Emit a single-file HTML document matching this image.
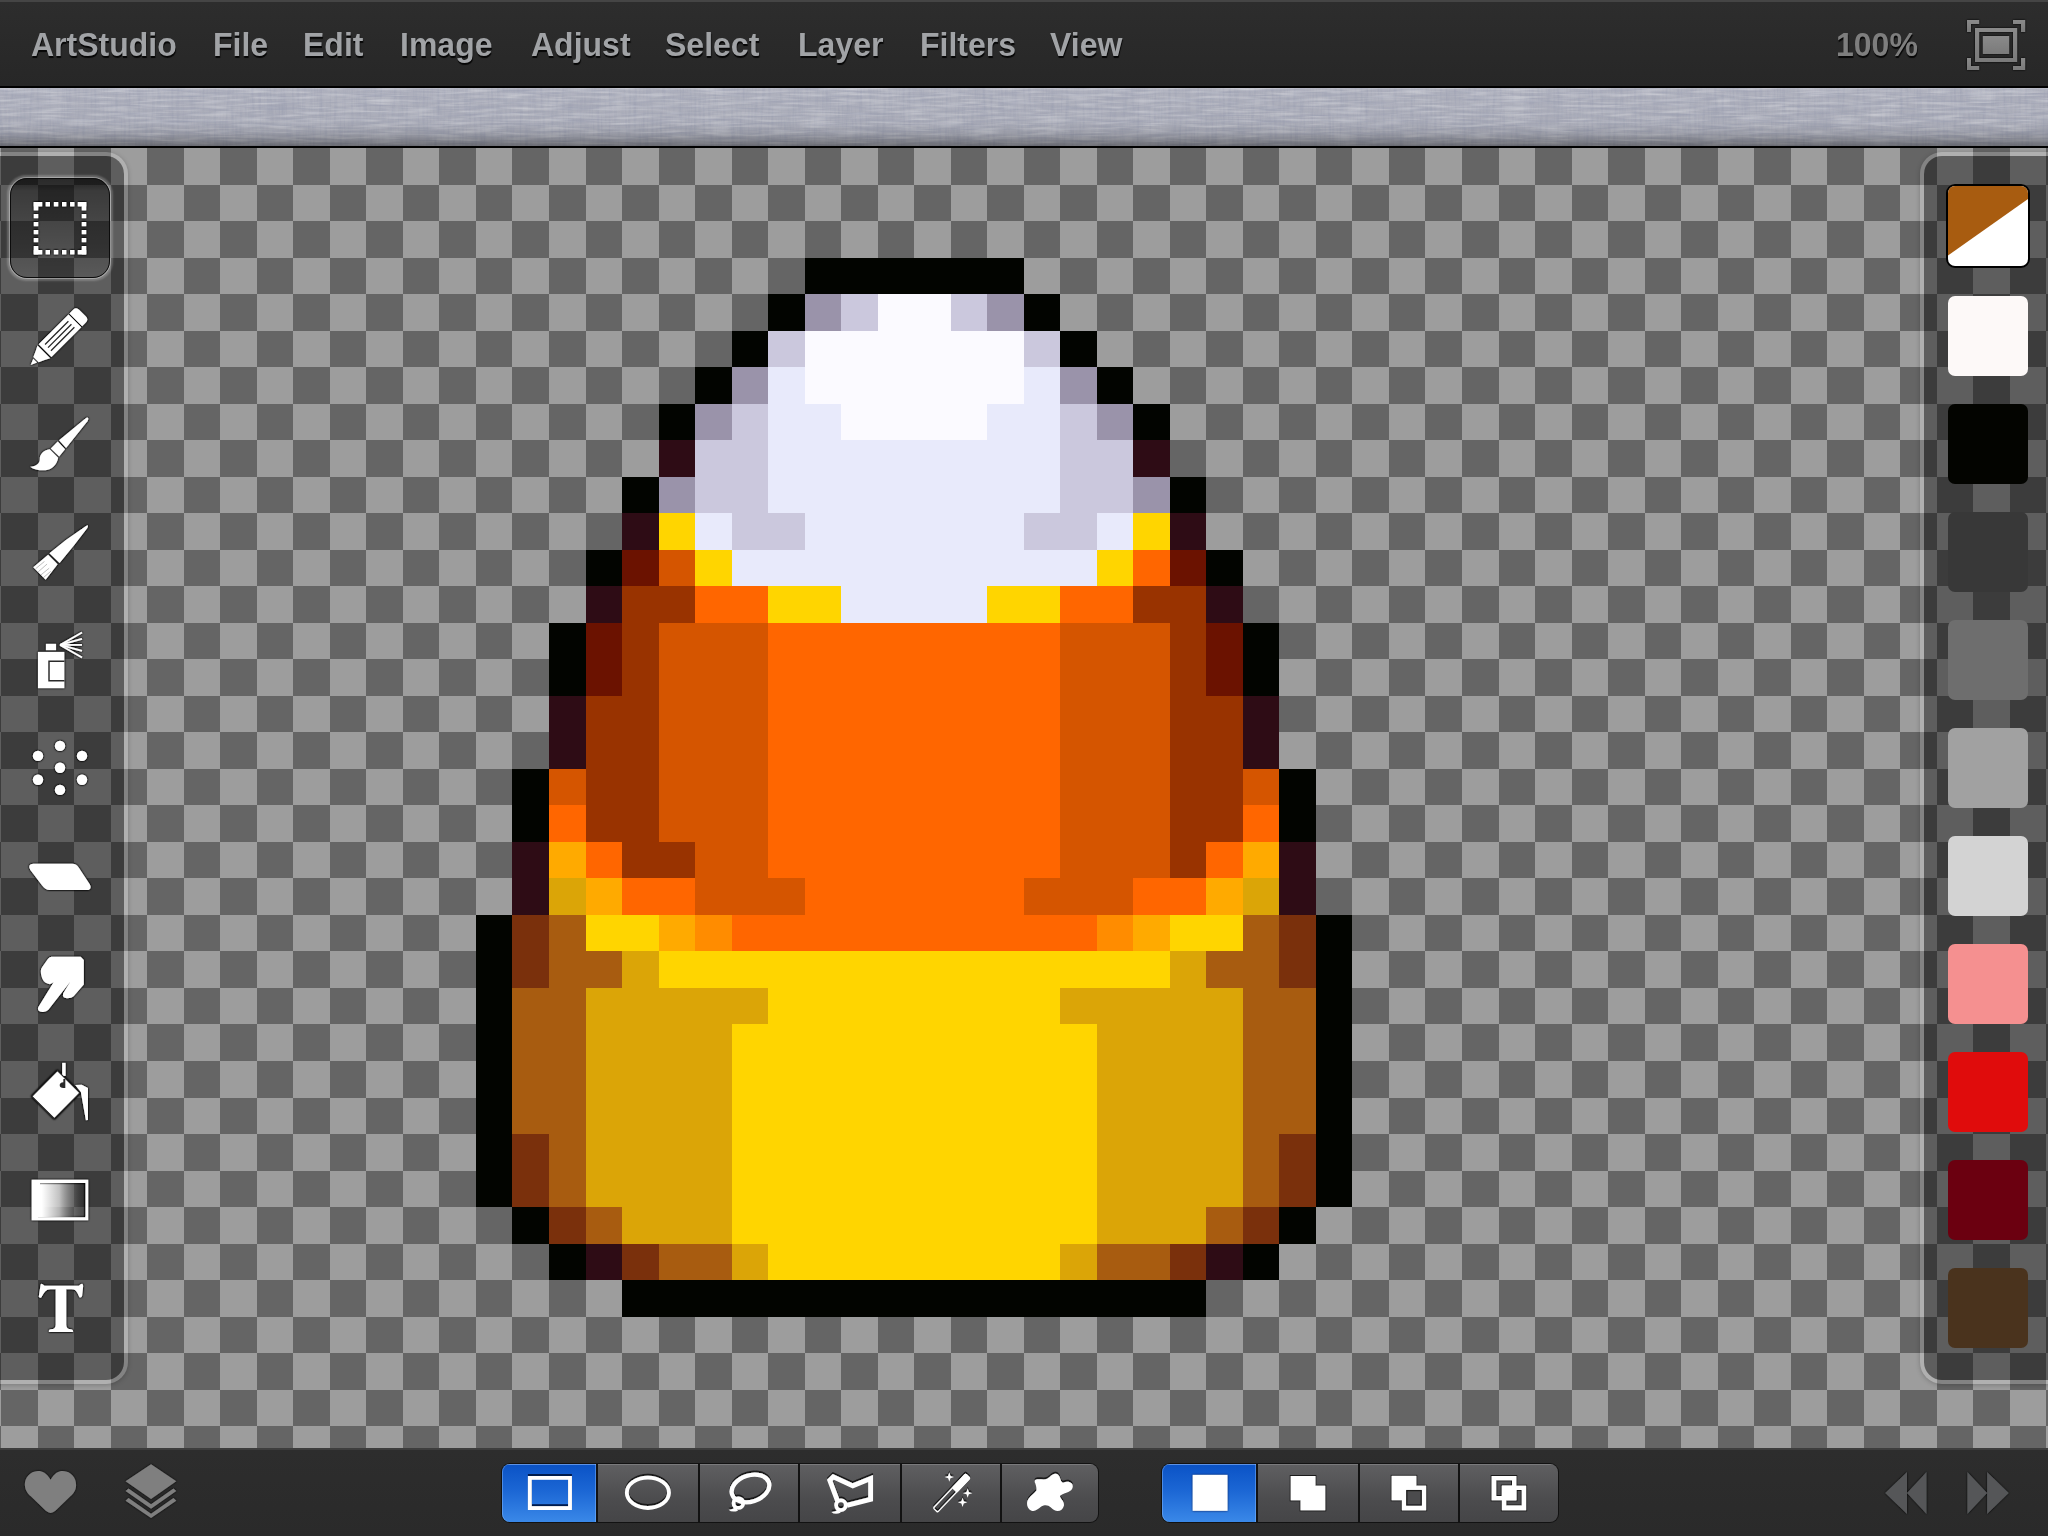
<!DOCTYPE html>
<html><head><meta charset="utf-8">
<style>
html,body{margin:0;padding:0;width:2048px;height:1536px;overflow:hidden;background:#2b2b2b}
body{position:relative;font-family:"Liberation Sans",sans-serif}
.a{position:absolute}
#menubar{left:0;top:0;width:2048px;height:86px;background:linear-gradient(#454545 0,#454545 2px,#2d2d2d 2px,#272727 100%)}
#menuline{left:0;top:86px;width:2048px;height:2px;background:#000}
.mi{position:absolute;top:27px;font-weight:bold;font-size:32px;line-height:36px;color:#a1a3a6;text-shadow:0.5px 1.5px 0.8px rgba(0,0,0,0.85);white-space:nowrap;transform:scaleY(1.04);transform-origin:0 75%}
#zoom{left:1836px;top:27px;font-weight:bold;font-size:32px;line-height:36px;color:#7e7e7e;text-shadow:0.5px 1.5px 0.8px rgba(0,0,0,0.85);transform:scaleY(1.04);transform-origin:0 75%}
#linen{left:0;top:88px;width:2048px;height:58px}
#linenline{left:0;top:146px;width:2048px;height:2px;background:#000}
#canvas{left:0;top:148px;width:2048px;height:1300px}
#toolbar{left:0;top:1448px;width:2048px;height:88px;background:linear-gradient(#3d3d3d 0,#3d3d3d 2px,#2d2d2d 2px,#2a2a2a 100%)}
#lpanel{left:-4px;top:152px;width:128px;height:1224px;border:4px solid rgba(255,255,255,0.2);border-left:none;border-radius:0 22px 22px 0;background:rgba(0,0,0,0.4);background-clip:padding-box;box-shadow:0 1px 5px rgba(0,0,0,0.22)}
#rpanel{left:1920px;top:152px;width:140px;height:1224px;border:4px solid rgba(255,255,255,0.2);border-right:none;border-radius:22px 0 0 22px;background:rgba(0,0,0,0.4);background-clip:padding-box;box-shadow:0 1px 5px rgba(0,0,0,0.22)}
#selbtn{left:10px;top:178px;width:98px;height:98px;border:1px solid #0c0c0c;border-radius:17px;
 background:linear-gradient(rgba(0,0,0,0.55) 0,rgba(0,0,0,0.5) 7%,rgba(0,0,0,0.38) 12%,rgba(0,0,0,0.05) 100%);
 box-shadow:0 0 0 1px rgba(255,255,255,0.3),0 0 2px 2.5px rgba(255,255,255,0.22)}
.sw{position:absolute;left:1948px;width:80px;height:80px;border-radius:7px}
#sw0{left:1946px;top:184px;width:80px;height:80px;border:2px solid #000;border-radius:9px;overflow:hidden;background:#000}

#seg1{left:501px;top:1463px;width:598px;height:60px;border-radius:9px;background:#121212}
#seg2{left:1161px;top:1463px;width:398px;height:60px;border-radius:9px;background:#121212}
.sg{position:absolute;top:1px;height:58px;background:linear-gradient(#7a7a7c 0,#7a7a7c 1px,#5f5f61 1px,#4c4c4e 60%,#454547 100%)}
.sb{background:linear-gradient(#5d92e4 0,#5d92e4 1px,#0b53c6 1px,#1b66d4 45%,#3a88e8 100%);box-shadow:inset 1px 0 0 rgba(140,190,255,0.45),inset -1px 0 0 rgba(140,190,255,0.45)}

</style></head><body>
<div id="menubar" class="a"></div>
<div id="menuline" class="a"></div>
<span class="mi" style="left:31px">ArtStudio</span><span class="mi" style="left:213px">File</span><span class="mi" style="left:303px">Edit</span><span class="mi" style="left:400px">Image</span><span class="mi" style="left:531px">Adjust</span><span class="mi" style="left:665px">Select</span><span class="mi" style="left:798px">Layer</span><span class="mi" style="left:920px">Filters</span><span class="mi" style="left:1050px">View</span>
<div id="zoom" class="a">100%</div>
<svg id="linen" class="a" width="2048" height="58" viewBox="0 0 2048 58">
<defs>
<filter id="nzv" x="0" y="0" width="100%" height="100%"><feTurbulence type="fractalNoise" baseFrequency="0.35 0.03" numOctaves="3" seed="3"/><feColorMatrix type="matrix" values="0 0 0 0 0.32  0 0 0 0 0.34  0 0 0 0 0.44  1.0 0 0 0 -0.4"/><feGaussianBlur stdDeviation="0.55"/></filter>
<filter id="nzh" x="0" y="0" width="100%" height="100%"><feTurbulence type="fractalNoise" baseFrequency="0.02 0.4" numOctaves="3" seed="7"/><feColorMatrix type="matrix" values="0 0 0 0 0.32  0 0 0 0 0.34  0 0 0 0 0.44  1.2 0 0 0 -0.5"/><feGaussianBlur stdDeviation="0.55"/></filter>
<filter id="nzl" x="0" y="0" width="100%" height="100%"><feTurbulence type="fractalNoise" baseFrequency="0.03 0.35" numOctaves="2" seed="11"/><feColorMatrix type="matrix" values="0 0 0 0 1  0 0 0 0 1  0 0 0 0 1  0.7 0 0 0 -0.3"/><feGaussianBlur stdDeviation="0.6"/></filter>
<linearGradient id="lg" x1="0" y1="0" x2="0" y2="1"><stop offset="0" stop-color="#000" stop-opacity="0"/><stop offset="0.6" stop-color="#000" stop-opacity="0.03"/><stop offset="0.78" stop-color="#000" stop-opacity="0.12"/><stop offset="0.92" stop-color="#000" stop-opacity="0.28"/><stop offset="1" stop-color="#000" stop-opacity="0.4"/></linearGradient>
</defs>
<rect width="2048" height="58" fill="#b0b2be"/>
<rect width="2048" height="58" filter="url(#nzv)"/>
<rect width="2048" height="58" filter="url(#nzh)"/>
<rect width="2048" height="58" filter="url(#nzl)"/>
<rect width="2048" height="58" fill="url(#lg)"/>
<rect width="2048" height="1.5" fill="#fff" opacity="0.12"/>
</svg>
<div id="linenline" class="a"></div>
<svg id="canvas" class="a" width="2048" height="1300" viewBox="0 148 2048 1300" shape-rendering="crispEdges">
<rect x="0" y="148" width="2048" height="1300" fill="#9d9d9d"/><g fill="#656565"><rect x="1" y="148" width="37" height="37"/><rect x="74" y="148" width="37" height="37"/><rect x="147" y="148" width="37" height="37"/><rect x="220" y="148" width="37" height="37"/><rect x="293" y="148" width="37" height="37"/><rect x="366" y="148" width="37" height="37"/><rect x="439" y="148" width="37" height="37"/><rect x="512" y="148" width="37" height="37"/><rect x="586" y="148" width="36" height="37"/><rect x="659" y="148" width="36" height="37"/><rect x="732" y="148" width="36" height="37"/><rect x="805" y="148" width="36" height="37"/><rect x="878" y="148" width="36" height="37"/><rect x="951" y="148" width="36" height="37"/><rect x="1024" y="148" width="36" height="37"/><rect x="1097" y="148" width="36" height="37"/><rect x="1170" y="148" width="36" height="37"/><rect x="1243" y="148" width="36" height="37"/><rect x="1316" y="148" width="36" height="37"/><rect x="1389" y="148" width="36" height="37"/><rect x="1462" y="148" width="37" height="37"/><rect x="1535" y="148" width="37" height="37"/><rect x="1608" y="148" width="37" height="37"/><rect x="1681" y="148" width="37" height="37"/><rect x="1754" y="148" width="37" height="37"/><rect x="1827" y="148" width="37" height="37"/><rect x="1900" y="148" width="37" height="37"/><rect x="1973" y="148" width="37" height="37"/><rect x="2046" y="148" width="2" height="37"/><rect x="0" y="185" width="1" height="36"/><rect x="38" y="185" width="36" height="36"/><rect x="111" y="185" width="36" height="36"/><rect x="184" y="185" width="36" height="36"/><rect x="257" y="185" width="36" height="36"/><rect x="330" y="185" width="36" height="36"/><rect x="403" y="185" width="36" height="36"/><rect x="476" y="185" width="36" height="36"/><rect x="549" y="185" width="37" height="36"/><rect x="622" y="185" width="37" height="36"/><rect x="695" y="185" width="37" height="36"/><rect x="768" y="185" width="37" height="36"/><rect x="841" y="185" width="37" height="36"/><rect x="914" y="185" width="37" height="36"/><rect x="987" y="185" width="37" height="36"/><rect x="1060" y="185" width="37" height="36"/><rect x="1133" y="185" width="37" height="36"/><rect x="1206" y="185" width="37" height="36"/><rect x="1279" y="185" width="37" height="36"/><rect x="1352" y="185" width="37" height="36"/><rect x="1425" y="185" width="37" height="36"/><rect x="1499" y="185" width="36" height="36"/><rect x="1572" y="185" width="36" height="36"/><rect x="1645" y="185" width="36" height="36"/><rect x="1718" y="185" width="36" height="36"/><rect x="1791" y="185" width="36" height="36"/><rect x="1864" y="185" width="36" height="36"/><rect x="1937" y="185" width="36" height="36"/><rect x="2010" y="185" width="36" height="36"/><rect x="1" y="221" width="37" height="37"/><rect x="74" y="221" width="37" height="37"/><rect x="147" y="221" width="37" height="37"/><rect x="220" y="221" width="37" height="37"/><rect x="293" y="221" width="37" height="37"/><rect x="366" y="221" width="37" height="37"/><rect x="439" y="221" width="37" height="37"/><rect x="512" y="221" width="37" height="37"/><rect x="586" y="221" width="36" height="37"/><rect x="659" y="221" width="36" height="37"/><rect x="732" y="221" width="36" height="37"/><rect x="805" y="221" width="36" height="37"/><rect x="878" y="221" width="36" height="37"/><rect x="951" y="221" width="36" height="37"/><rect x="1024" y="221" width="36" height="37"/><rect x="1097" y="221" width="36" height="37"/><rect x="1170" y="221" width="36" height="37"/><rect x="1243" y="221" width="36" height="37"/><rect x="1316" y="221" width="36" height="37"/><rect x="1389" y="221" width="36" height="37"/><rect x="1462" y="221" width="37" height="37"/><rect x="1535" y="221" width="37" height="37"/><rect x="1608" y="221" width="37" height="37"/><rect x="1681" y="221" width="37" height="37"/><rect x="1754" y="221" width="37" height="37"/><rect x="1827" y="221" width="37" height="37"/><rect x="1900" y="221" width="37" height="37"/><rect x="1973" y="221" width="37" height="37"/><rect x="2046" y="221" width="2" height="37"/><rect x="0" y="258" width="1" height="36"/><rect x="38" y="258" width="36" height="36"/><rect x="111" y="258" width="36" height="36"/><rect x="184" y="258" width="36" height="36"/><rect x="257" y="258" width="36" height="36"/><rect x="330" y="258" width="36" height="36"/><rect x="403" y="258" width="36" height="36"/><rect x="476" y="258" width="36" height="36"/><rect x="549" y="258" width="37" height="36"/><rect x="622" y="258" width="37" height="36"/><rect x="695" y="258" width="37" height="36"/><rect x="768" y="258" width="37" height="36"/><rect x="841" y="258" width="37" height="36"/><rect x="914" y="258" width="37" height="36"/><rect x="987" y="258" width="37" height="36"/><rect x="1060" y="258" width="37" height="36"/><rect x="1133" y="258" width="37" height="36"/><rect x="1206" y="258" width="37" height="36"/><rect x="1279" y="258" width="37" height="36"/><rect x="1352" y="258" width="37" height="36"/><rect x="1425" y="258" width="37" height="36"/><rect x="1499" y="258" width="36" height="36"/><rect x="1572" y="258" width="36" height="36"/><rect x="1645" y="258" width="36" height="36"/><rect x="1718" y="258" width="36" height="36"/><rect x="1791" y="258" width="36" height="36"/><rect x="1864" y="258" width="36" height="36"/><rect x="1937" y="258" width="36" height="36"/><rect x="2010" y="258" width="36" height="36"/><rect x="1" y="294" width="37" height="37"/><rect x="74" y="294" width="37" height="37"/><rect x="147" y="294" width="37" height="37"/><rect x="220" y="294" width="37" height="37"/><rect x="293" y="294" width="37" height="37"/><rect x="366" y="294" width="37" height="37"/><rect x="439" y="294" width="37" height="37"/><rect x="512" y="294" width="37" height="37"/><rect x="586" y="294" width="36" height="37"/><rect x="659" y="294" width="36" height="37"/><rect x="732" y="294" width="36" height="37"/><rect x="805" y="294" width="36" height="37"/><rect x="878" y="294" width="36" height="37"/><rect x="951" y="294" width="36" height="37"/><rect x="1024" y="294" width="36" height="37"/><rect x="1097" y="294" width="36" height="37"/><rect x="1170" y="294" width="36" height="37"/><rect x="1243" y="294" width="36" height="37"/><rect x="1316" y="294" width="36" height="37"/><rect x="1389" y="294" width="36" height="37"/><rect x="1462" y="294" width="37" height="37"/><rect x="1535" y="294" width="37" height="37"/><rect x="1608" y="294" width="37" height="37"/><rect x="1681" y="294" width="37" height="37"/><rect x="1754" y="294" width="37" height="37"/><rect x="1827" y="294" width="37" height="37"/><rect x="1900" y="294" width="37" height="37"/><rect x="1973" y="294" width="37" height="37"/><rect x="2046" y="294" width="2" height="37"/><rect x="0" y="331" width="1" height="36"/><rect x="38" y="331" width="36" height="36"/><rect x="111" y="331" width="36" height="36"/><rect x="184" y="331" width="36" height="36"/><rect x="257" y="331" width="36" height="36"/><rect x="330" y="331" width="36" height="36"/><rect x="403" y="331" width="36" height="36"/><rect x="476" y="331" width="36" height="36"/><rect x="549" y="331" width="37" height="36"/><rect x="622" y="331" width="37" height="36"/><rect x="695" y="331" width="37" height="36"/><rect x="768" y="331" width="37" height="36"/><rect x="841" y="331" width="37" height="36"/><rect x="914" y="331" width="37" height="36"/><rect x="987" y="331" width="37" height="36"/><rect x="1060" y="331" width="37" height="36"/><rect x="1133" y="331" width="37" height="36"/><rect x="1206" y="331" width="37" height="36"/><rect x="1279" y="331" width="37" height="36"/><rect x="1352" y="331" width="37" height="36"/><rect x="1425" y="331" width="37" height="36"/><rect x="1499" y="331" width="36" height="36"/><rect x="1572" y="331" width="36" height="36"/><rect x="1645" y="331" width="36" height="36"/><rect x="1718" y="331" width="36" height="36"/><rect x="1791" y="331" width="36" height="36"/><rect x="1864" y="331" width="36" height="36"/><rect x="1937" y="331" width="36" height="36"/><rect x="2010" y="331" width="36" height="36"/><rect x="1" y="367" width="37" height="37"/><rect x="74" y="367" width="37" height="37"/><rect x="147" y="367" width="37" height="37"/><rect x="220" y="367" width="37" height="37"/><rect x="293" y="367" width="37" height="37"/><rect x="366" y="367" width="37" height="37"/><rect x="439" y="367" width="37" height="37"/><rect x="512" y="367" width="37" height="37"/><rect x="586" y="367" width="36" height="37"/><rect x="659" y="367" width="36" height="37"/><rect x="732" y="367" width="36" height="37"/><rect x="805" y="367" width="36" height="37"/><rect x="878" y="367" width="36" height="37"/><rect x="951" y="367" width="36" height="37"/><rect x="1024" y="367" width="36" height="37"/><rect x="1097" y="367" width="36" height="37"/><rect x="1170" y="367" width="36" height="37"/><rect x="1243" y="367" width="36" height="37"/><rect x="1316" y="367" width="36" height="37"/><rect x="1389" y="367" width="36" height="37"/><rect x="1462" y="367" width="37" height="37"/><rect x="1535" y="367" width="37" height="37"/><rect x="1608" y="367" width="37" height="37"/><rect x="1681" y="367" width="37" height="37"/><rect x="1754" y="367" width="37" height="37"/><rect x="1827" y="367" width="37" height="37"/><rect x="1900" y="367" width="37" height="37"/><rect x="1973" y="367" width="37" height="37"/><rect x="2046" y="367" width="2" height="37"/><rect x="0" y="404" width="1" height="36"/><rect x="38" y="404" width="36" height="36"/><rect x="111" y="404" width="36" height="36"/><rect x="184" y="404" width="36" height="36"/><rect x="257" y="404" width="36" height="36"/><rect x="330" y="404" width="36" height="36"/><rect x="403" y="404" width="36" height="36"/><rect x="476" y="404" width="36" height="36"/><rect x="549" y="404" width="37" height="36"/><rect x="622" y="404" width="37" height="36"/><rect x="695" y="404" width="37" height="36"/><rect x="768" y="404" width="37" height="36"/><rect x="841" y="404" width="37" height="36"/><rect x="914" y="404" width="37" height="36"/><rect x="987" y="404" width="37" height="36"/><rect x="1060" y="404" width="37" height="36"/><rect x="1133" y="404" width="37" height="36"/><rect x="1206" y="404" width="37" height="36"/><rect x="1279" y="404" width="37" height="36"/><rect x="1352" y="404" width="37" height="36"/><rect x="1425" y="404" width="37" height="36"/><rect x="1499" y="404" width="36" height="36"/><rect x="1572" y="404" width="36" height="36"/><rect x="1645" y="404" width="36" height="36"/><rect x="1718" y="404" width="36" height="36"/><rect x="1791" y="404" width="36" height="36"/><rect x="1864" y="404" width="36" height="36"/><rect x="1937" y="404" width="36" height="36"/><rect x="2010" y="404" width="36" height="36"/><rect x="1" y="440" width="37" height="37"/><rect x="74" y="440" width="37" height="37"/><rect x="147" y="440" width="37" height="37"/><rect x="220" y="440" width="37" height="37"/><rect x="293" y="440" width="37" height="37"/><rect x="366" y="440" width="37" height="37"/><rect x="439" y="440" width="37" height="37"/><rect x="512" y="440" width="37" height="37"/><rect x="586" y="440" width="36" height="37"/><rect x="659" y="440" width="36" height="37"/><rect x="732" y="440" width="36" height="37"/><rect x="805" y="440" width="36" height="37"/><rect x="878" y="440" width="36" height="37"/><rect x="951" y="440" width="36" height="37"/><rect x="1024" y="440" width="36" height="37"/><rect x="1097" y="440" width="36" height="37"/><rect x="1170" y="440" width="36" height="37"/><rect x="1243" y="440" width="36" height="37"/><rect x="1316" y="440" width="36" height="37"/><rect x="1389" y="440" width="36" height="37"/><rect x="1462" y="440" width="37" height="37"/><rect x="1535" y="440" width="37" height="37"/><rect x="1608" y="440" width="37" height="37"/><rect x="1681" y="440" width="37" height="37"/><rect x="1754" y="440" width="37" height="37"/><rect x="1827" y="440" width="37" height="37"/><rect x="1900" y="440" width="37" height="37"/><rect x="1973" y="440" width="37" height="37"/><rect x="2046" y="440" width="2" height="37"/><rect x="0" y="477" width="1" height="36"/><rect x="38" y="477" width="36" height="36"/><rect x="111" y="477" width="36" height="36"/><rect x="184" y="477" width="36" height="36"/><rect x="257" y="477" width="36" height="36"/><rect x="330" y="477" width="36" height="36"/><rect x="403" y="477" width="36" height="36"/><rect x="476" y="477" width="36" height="36"/><rect x="549" y="477" width="37" height="36"/><rect x="622" y="477" width="37" height="36"/><rect x="695" y="477" width="37" height="36"/><rect x="768" y="477" width="37" height="36"/><rect x="841" y="477" width="37" height="36"/><rect x="914" y="477" width="37" height="36"/><rect x="987" y="477" width="37" height="36"/><rect x="1060" y="477" width="37" height="36"/><rect x="1133" y="477" width="37" height="36"/><rect x="1206" y="477" width="37" height="36"/><rect x="1279" y="477" width="37" height="36"/><rect x="1352" y="477" width="37" height="36"/><rect x="1425" y="477" width="37" height="36"/><rect x="1499" y="477" width="36" height="36"/><rect x="1572" y="477" width="36" height="36"/><rect x="1645" y="477" width="36" height="36"/><rect x="1718" y="477" width="36" height="36"/><rect x="1791" y="477" width="36" height="36"/><rect x="1864" y="477" width="36" height="36"/><rect x="1937" y="477" width="36" height="36"/><rect x="2010" y="477" width="36" height="36"/><rect x="1" y="513" width="37" height="37"/><rect x="74" y="513" width="37" height="37"/><rect x="147" y="513" width="37" height="37"/><rect x="220" y="513" width="37" height="37"/><rect x="293" y="513" width="37" height="37"/><rect x="366" y="513" width="37" height="37"/><rect x="439" y="513" width="37" height="37"/><rect x="512" y="513" width="37" height="37"/><rect x="586" y="513" width="36" height="37"/><rect x="659" y="513" width="36" height="37"/><rect x="732" y="513" width="36" height="37"/><rect x="805" y="513" width="36" height="37"/><rect x="878" y="513" width="36" height="37"/><rect x="951" y="513" width="36" height="37"/><rect x="1024" y="513" width="36" height="37"/><rect x="1097" y="513" width="36" height="37"/><rect x="1170" y="513" width="36" height="37"/><rect x="1243" y="513" width="36" height="37"/><rect x="1316" y="513" width="36" height="37"/><rect x="1389" y="513" width="36" height="37"/><rect x="1462" y="513" width="37" height="37"/><rect x="1535" y="513" width="37" height="37"/><rect x="1608" y="513" width="37" height="37"/><rect x="1681" y="513" width="37" height="37"/><rect x="1754" y="513" width="37" height="37"/><rect x="1827" y="513" width="37" height="37"/><rect x="1900" y="513" width="37" height="37"/><rect x="1973" y="513" width="37" height="37"/><rect x="2046" y="513" width="2" height="37"/><rect x="0" y="550" width="1" height="36"/><rect x="38" y="550" width="36" height="36"/><rect x="111" y="550" width="36" height="36"/><rect x="184" y="550" width="36" height="36"/><rect x="257" y="550" width="36" height="36"/><rect x="330" y="550" width="36" height="36"/><rect x="403" y="550" width="36" height="36"/><rect x="476" y="550" width="36" height="36"/><rect x="549" y="550" width="37" height="36"/><rect x="622" y="550" width="37" height="36"/><rect x="695" y="550" width="37" height="36"/><rect x="768" y="550" width="37" height="36"/><rect x="841" y="550" width="37" height="36"/><rect x="914" y="550" width="37" height="36"/><rect x="987" y="550" width="37" height="36"/><rect x="1060" y="550" width="37" height="36"/><rect x="1133" y="550" width="37" height="36"/><rect x="1206" y="550" width="37" height="36"/><rect x="1279" y="550" width="37" height="36"/><rect x="1352" y="550" width="37" height="36"/><rect x="1425" y="550" width="37" height="36"/><rect x="1499" y="550" width="36" height="36"/><rect x="1572" y="550" width="36" height="36"/><rect x="1645" y="550" width="36" height="36"/><rect x="1718" y="550" width="36" height="36"/><rect x="1791" y="550" width="36" height="36"/><rect x="1864" y="550" width="36" height="36"/><rect x="1937" y="550" width="36" height="36"/><rect x="2010" y="550" width="36" height="36"/><rect x="1" y="586" width="37" height="37"/><rect x="74" y="586" width="37" height="37"/><rect x="147" y="586" width="37" height="37"/><rect x="220" y="586" width="37" height="37"/><rect x="293" y="586" width="37" height="37"/><rect x="366" y="586" width="37" height="37"/><rect x="439" y="586" width="37" height="37"/><rect x="512" y="586" width="37" height="37"/><rect x="586" y="586" width="36" height="37"/><rect x="659" y="586" width="36" height="37"/><rect x="732" y="586" width="36" height="37"/><rect x="805" y="586" width="36" height="37"/><rect x="878" y="586" width="36" height="37"/><rect x="951" y="586" width="36" height="37"/><rect x="1024" y="586" width="36" height="37"/><rect x="1097" y="586" width="36" height="37"/><rect x="1170" y="586" width="36" height="37"/><rect x="1243" y="586" width="36" height="37"/><rect x="1316" y="586" width="36" height="37"/><rect x="1389" y="586" width="36" height="37"/><rect x="1462" y="586" width="37" height="37"/><rect x="1535" y="586" width="37" height="37"/><rect x="1608" y="586" width="37" height="37"/><rect x="1681" y="586" width="37" height="37"/><rect x="1754" y="586" width="37" height="37"/><rect x="1827" y="586" width="37" height="37"/><rect x="1900" y="586" width="37" height="37"/><rect x="1973" y="586" width="37" height="37"/><rect x="2046" y="586" width="2" height="37"/><rect x="0" y="623" width="1" height="36"/><rect x="38" y="623" width="36" height="36"/><rect x="111" y="623" width="36" height="36"/><rect x="184" y="623" width="36" height="36"/><rect x="257" y="623" width="36" height="36"/><rect x="330" y="623" width="36" height="36"/><rect x="403" y="623" width="36" height="36"/><rect x="476" y="623" width="36" height="36"/><rect x="549" y="623" width="37" height="36"/><rect x="622" y="623" width="37" height="36"/><rect x="695" y="623" width="37" height="36"/><rect x="768" y="623" width="37" height="36"/><rect x="841" y="623" width="37" height="36"/><rect x="914" y="623" width="37" height="36"/><rect x="987" y="623" width="37" height="36"/><rect x="1060" y="623" width="37" height="36"/><rect x="1133" y="623" width="37" height="36"/><rect x="1206" y="623" width="37" height="36"/><rect x="1279" y="623" width="37" height="36"/><rect x="1352" y="623" width="37" height="36"/><rect x="1425" y="623" width="37" height="36"/><rect x="1499" y="623" width="36" height="36"/><rect x="1572" y="623" width="36" height="36"/><rect x="1645" y="623" width="36" height="36"/><rect x="1718" y="623" width="36" height="36"/><rect x="1791" y="623" width="36" height="36"/><rect x="1864" y="623" width="36" height="36"/><rect x="1937" y="623" width="36" height="36"/><rect x="2010" y="623" width="36" height="36"/><rect x="1" y="659" width="37" height="37"/><rect x="74" y="659" width="37" height="37"/><rect x="147" y="659" width="37" height="37"/><rect x="220" y="659" width="37" height="37"/><rect x="293" y="659" width="37" height="37"/><rect x="366" y="659" width="37" height="37"/><rect x="439" y="659" width="37" height="37"/><rect x="512" y="659" width="37" height="37"/><rect x="586" y="659" width="36" height="37"/><rect x="659" y="659" width="36" height="37"/><rect x="732" y="659" width="36" height="37"/><rect x="805" y="659" width="36" height="37"/><rect x="878" y="659" width="36" height="37"/><rect x="951" y="659" width="36" height="37"/><rect x="1024" y="659" width="36" height="37"/><rect x="1097" y="659" width="36" height="37"/><rect x="1170" y="659" width="36" height="37"/><rect x="1243" y="659" width="36" height="37"/><rect x="1316" y="659" width="36" height="37"/><rect x="1389" y="659" width="36" height="37"/><rect x="1462" y="659" width="37" height="37"/><rect x="1535" y="659" width="37" height="37"/><rect x="1608" y="659" width="37" height="37"/><rect x="1681" y="659" width="37" height="37"/><rect x="1754" y="659" width="37" height="37"/><rect x="1827" y="659" width="37" height="37"/><rect x="1900" y="659" width="37" height="37"/><rect x="1973" y="659" width="37" height="37"/><rect x="2046" y="659" width="2" height="37"/><rect x="0" y="696" width="1" height="36"/><rect x="38" y="696" width="36" height="36"/><rect x="111" y="696" width="36" height="36"/><rect x="184" y="696" width="36" height="36"/><rect x="257" y="696" width="36" height="36"/><rect x="330" y="696" width="36" height="36"/><rect x="403" y="696" width="36" height="36"/><rect x="476" y="696" width="36" height="36"/><rect x="549" y="696" width="37" height="36"/><rect x="622" y="696" width="37" height="36"/><rect x="695" y="696" width="37" height="36"/><rect x="768" y="696" width="37" height="36"/><rect x="841" y="696" width="37" height="36"/><rect x="914" y="696" width="37" height="36"/><rect x="987" y="696" width="37" height="36"/><rect x="1060" y="696" width="37" height="36"/><rect x="1133" y="696" width="37" height="36"/><rect x="1206" y="696" width="37" height="36"/><rect x="1279" y="696" width="37" height="36"/><rect x="1352" y="696" width="37" height="36"/><rect x="1425" y="696" width="37" height="36"/><rect x="1499" y="696" width="36" height="36"/><rect x="1572" y="696" width="36" height="36"/><rect x="1645" y="696" width="36" height="36"/><rect x="1718" y="696" width="36" height="36"/><rect x="1791" y="696" width="36" height="36"/><rect x="1864" y="696" width="36" height="36"/><rect x="1937" y="696" width="36" height="36"/><rect x="2010" y="696" width="36" height="36"/><rect x="1" y="732" width="37" height="37"/><rect x="74" y="732" width="37" height="37"/><rect x="147" y="732" width="37" height="37"/><rect x="220" y="732" width="37" height="37"/><rect x="293" y="732" width="37" height="37"/><rect x="366" y="732" width="37" height="37"/><rect x="439" y="732" width="37" height="37"/><rect x="512" y="732" width="37" height="37"/><rect x="586" y="732" width="36" height="37"/><rect x="659" y="732" width="36" height="37"/><rect x="732" y="732" width="36" height="37"/><rect x="805" y="732" width="36" height="37"/><rect x="878" y="732" width="36" height="37"/><rect x="951" y="732" width="36" height="37"/><rect x="1024" y="732" width="36" height="37"/><rect x="1097" y="732" width="36" height="37"/><rect x="1170" y="732" width="36" height="37"/><rect x="1243" y="732" width="36" height="37"/><rect x="1316" y="732" width="36" height="37"/><rect x="1389" y="732" width="36" height="37"/><rect x="1462" y="732" width="37" height="37"/><rect x="1535" y="732" width="37" height="37"/><rect x="1608" y="732" width="37" height="37"/><rect x="1681" y="732" width="37" height="37"/><rect x="1754" y="732" width="37" height="37"/><rect x="1827" y="732" width="37" height="37"/><rect x="1900" y="732" width="37" height="37"/><rect x="1973" y="732" width="37" height="37"/><rect x="2046" y="732" width="2" height="37"/><rect x="0" y="769" width="1" height="36"/><rect x="38" y="769" width="36" height="36"/><rect x="111" y="769" width="36" height="36"/><rect x="184" y="769" width="36" height="36"/><rect x="257" y="769" width="36" height="36"/><rect x="330" y="769" width="36" height="36"/><rect x="403" y="769" width="36" height="36"/><rect x="476" y="769" width="36" height="36"/><rect x="549" y="769" width="37" height="36"/><rect x="622" y="769" width="37" height="36"/><rect x="695" y="769" width="37" height="36"/><rect x="768" y="769" width="37" height="36"/><rect x="841" y="769" width="37" height="36"/><rect x="914" y="769" width="37" height="36"/><rect x="987" y="769" width="37" height="36"/><rect x="1060" y="769" width="37" height="36"/><rect x="1133" y="769" width="37" height="36"/><rect x="1206" y="769" width="37" height="36"/><rect x="1279" y="769" width="37" height="36"/><rect x="1352" y="769" width="37" height="36"/><rect x="1425" y="769" width="37" height="36"/><rect x="1499" y="769" width="36" height="36"/><rect x="1572" y="769" width="36" height="36"/><rect x="1645" y="769" width="36" height="36"/><rect x="1718" y="769" width="36" height="36"/><rect x="1791" y="769" width="36" height="36"/><rect x="1864" y="769" width="36" height="36"/><rect x="1937" y="769" width="36" height="36"/><rect x="2010" y="769" width="36" height="36"/><rect x="1" y="805" width="37" height="37"/><rect x="74" y="805" width="37" height="37"/><rect x="147" y="805" width="37" height="37"/><rect x="220" y="805" width="37" height="37"/><rect x="293" y="805" width="37" height="37"/><rect x="366" y="805" width="37" height="37"/><rect x="439" y="805" width="37" height="37"/><rect x="512" y="805" width="37" height="37"/><rect x="586" y="805" width="36" height="37"/><rect x="659" y="805" width="36" height="37"/><rect x="732" y="805" width="36" height="37"/><rect x="805" y="805" width="36" height="37"/><rect x="878" y="805" width="36" height="37"/><rect x="951" y="805" width="36" height="37"/><rect x="1024" y="805" width="36" height="37"/><rect x="1097" y="805" width="36" height="37"/><rect x="1170" y="805" width="36" height="37"/><rect x="1243" y="805" width="36" height="37"/><rect x="1316" y="805" width="36" height="37"/><rect x="1389" y="805" width="36" height="37"/><rect x="1462" y="805" width="37" height="37"/><rect x="1535" y="805" width="37" height="37"/><rect x="1608" y="805" width="37" height="37"/><rect x="1681" y="805" width="37" height="37"/><rect x="1754" y="805" width="37" height="37"/><rect x="1827" y="805" width="37" height="37"/><rect x="1900" y="805" width="37" height="37"/><rect x="1973" y="805" width="37" height="37"/><rect x="2046" y="805" width="2" height="37"/><rect x="0" y="842" width="1" height="36"/><rect x="38" y="842" width="36" height="36"/><rect x="111" y="842" width="36" height="36"/><rect x="184" y="842" width="36" height="36"/><rect x="257" y="842" width="36" height="36"/><rect x="330" y="842" width="36" height="36"/><rect x="403" y="842" width="36" height="36"/><rect x="476" y="842" width="36" height="36"/><rect x="549" y="842" width="37" height="36"/><rect x="622" y="842" width="37" height="36"/><rect x="695" y="842" width="37" height="36"/><rect x="768" y="842" width="37" height="36"/><rect x="841" y="842" width="37" height="36"/><rect x="914" y="842" width="37" height="36"/><rect x="987" y="842" width="37" height="36"/><rect x="1060" y="842" width="37" height="36"/><rect x="1133" y="842" width="37" height="36"/><rect x="1206" y="842" width="37" height="36"/><rect x="1279" y="842" width="37" height="36"/><rect x="1352" y="842" width="37" height="36"/><rect x="1425" y="842" width="37" height="36"/><rect x="1499" y="842" width="36" height="36"/><rect x="1572" y="842" width="36" height="36"/><rect x="1645" y="842" width="36" height="36"/><rect x="1718" y="842" width="36" height="36"/><rect x="1791" y="842" width="36" height="36"/><rect x="1864" y="842" width="36" height="36"/><rect x="1937" y="842" width="36" height="36"/><rect x="2010" y="842" width="36" height="36"/><rect x="1" y="878" width="37" height="37"/><rect x="74" y="878" width="37" height="37"/><rect x="147" y="878" width="37" height="37"/><rect x="220" y="878" width="37" height="37"/><rect x="293" y="878" width="37" height="37"/><rect x="366" y="878" width="37" height="37"/><rect x="439" y="878" width="37" height="37"/><rect x="512" y="878" width="37" height="37"/><rect x="586" y="878" width="36" height="37"/><rect x="659" y="878" width="36" height="37"/><rect x="732" y="878" width="36" height="37"/><rect x="805" y="878" width="36" height="37"/><rect x="878" y="878" width="36" height="37"/><rect x="951" y="878" width="36" height="37"/><rect x="1024" y="878" width="36" height="37"/><rect x="1097" y="878" width="36" height="37"/><rect x="1170" y="878" width="36" height="37"/><rect x="1243" y="878" width="36" height="37"/><rect x="1316" y="878" width="36" height="37"/><rect x="1389" y="878" width="36" height="37"/><rect x="1462" y="878" width="37" height="37"/><rect x="1535" y="878" width="37" height="37"/><rect x="1608" y="878" width="37" height="37"/><rect x="1681" y="878" width="37" height="37"/><rect x="1754" y="878" width="37" height="37"/><rect x="1827" y="878" width="37" height="37"/><rect x="1900" y="878" width="37" height="37"/><rect x="1973" y="878" width="37" height="37"/><rect x="2046" y="878" width="2" height="37"/><rect x="0" y="915" width="1" height="36"/><rect x="38" y="915" width="36" height="36"/><rect x="111" y="915" width="36" height="36"/><rect x="184" y="915" width="36" height="36"/><rect x="257" y="915" width="36" height="36"/><rect x="330" y="915" width="36" height="36"/><rect x="403" y="915" width="36" height="36"/><rect x="476" y="915" width="36" height="36"/><rect x="549" y="915" width="37" height="36"/><rect x="622" y="915" width="37" height="36"/><rect x="695" y="915" width="37" height="36"/><rect x="768" y="915" width="37" height="36"/><rect x="841" y="915" width="37" height="36"/><rect x="914" y="915" width="37" height="36"/><rect x="987" y="915" width="37" height="36"/><rect x="1060" y="915" width="37" height="36"/><rect x="1133" y="915" width="37" height="36"/><rect x="1206" y="915" width="37" height="36"/><rect x="1279" y="915" width="37" height="36"/><rect x="1352" y="915" width="37" height="36"/><rect x="1425" y="915" width="37" height="36"/><rect x="1499" y="915" width="36" height="36"/><rect x="1572" y="915" width="36" height="36"/><rect x="1645" y="915" width="36" height="36"/><rect x="1718" y="915" width="36" height="36"/><rect x="1791" y="915" width="36" height="36"/><rect x="1864" y="915" width="36" height="36"/><rect x="1937" y="915" width="36" height="36"/><rect x="2010" y="915" width="36" height="36"/><rect x="1" y="951" width="37" height="37"/><rect x="74" y="951" width="37" height="37"/><rect x="147" y="951" width="37" height="37"/><rect x="220" y="951" width="37" height="37"/><rect x="293" y="951" width="37" height="37"/><rect x="366" y="951" width="37" height="37"/><rect x="439" y="951" width="37" height="37"/><rect x="512" y="951" width="37" height="37"/><rect x="586" y="951" width="36" height="37"/><rect x="659" y="951" width="36" height="37"/><rect x="732" y="951" width="36" height="37"/><rect x="805" y="951" width="36" height="37"/><rect x="878" y="951" width="36" height="37"/><rect x="951" y="951" width="36" height="37"/><rect x="1024" y="951" width="36" height="37"/><rect x="1097" y="951" width="36" height="37"/><rect x="1170" y="951" width="36" height="37"/><rect x="1243" y="951" width="36" height="37"/><rect x="1316" y="951" width="36" height="37"/><rect x="1389" y="951" width="36" height="37"/><rect x="1462" y="951" width="37" height="37"/><rect x="1535" y="951" width="37" height="37"/><rect x="1608" y="951" width="37" height="37"/><rect x="1681" y="951" width="37" height="37"/><rect x="1754" y="951" width="37" height="37"/><rect x="1827" y="951" width="37" height="37"/><rect x="1900" y="951" width="37" height="37"/><rect x="1973" y="951" width="37" height="37"/><rect x="2046" y="951" width="2" height="37"/><rect x="0" y="988" width="1" height="36"/><rect x="38" y="988" width="36" height="36"/><rect x="111" y="988" width="36" height="36"/><rect x="184" y="988" width="36" height="36"/><rect x="257" y="988" width="36" height="36"/><rect x="330" y="988" width="36" height="36"/><rect x="403" y="988" width="36" height="36"/><rect x="476" y="988" width="36" height="36"/><rect x="549" y="988" width="37" height="36"/><rect x="622" y="988" width="37" height="36"/><rect x="695" y="988" width="37" height="36"/><rect x="768" y="988" width="37" height="36"/><rect x="841" y="988" width="37" height="36"/><rect x="914" y="988" width="37" height="36"/><rect x="987" y="988" width="37" height="36"/><rect x="1060" y="988" width="37" height="36"/><rect x="1133" y="988" width="37" height="36"/><rect x="1206" y="988" width="37" height="36"/><rect x="1279" y="988" width="37" height="36"/><rect x="1352" y="988" width="37" height="36"/><rect x="1425" y="988" width="37" height="36"/><rect x="1499" y="988" width="36" height="36"/><rect x="1572" y="988" width="36" height="36"/><rect x="1645" y="988" width="36" height="36"/><rect x="1718" y="988" width="36" height="36"/><rect x="1791" y="988" width="36" height="36"/><rect x="1864" y="988" width="36" height="36"/><rect x="1937" y="988" width="36" height="36"/><rect x="2010" y="988" width="36" height="36"/><rect x="1" y="1024" width="37" height="37"/><rect x="74" y="1024" width="37" height="37"/><rect x="147" y="1024" width="37" height="37"/><rect x="220" y="1024" width="37" height="37"/><rect x="293" y="1024" width="37" height="37"/><rect x="366" y="1024" width="37" height="37"/><rect x="439" y="1024" width="37" height="37"/><rect x="512" y="1024" width="37" height="37"/><rect x="586" y="1024" width="36" height="37"/><rect x="659" y="1024" width="36" height="37"/><rect x="732" y="1024" width="36" height="37"/><rect x="805" y="1024" width="36" height="37"/><rect x="878" y="1024" width="36" height="37"/><rect x="951" y="1024" width="36" height="37"/><rect x="1024" y="1024" width="36" height="37"/><rect x="1097" y="1024" width="36" height="37"/><rect x="1170" y="1024" width="36" height="37"/><rect x="1243" y="1024" width="36" height="37"/><rect x="1316" y="1024" width="36" height="37"/><rect x="1389" y="1024" width="36" height="37"/><rect x="1462" y="1024" width="37" height="37"/><rect x="1535" y="1024" width="37" height="37"/><rect x="1608" y="1024" width="37" height="37"/><rect x="1681" y="1024" width="37" height="37"/><rect x="1754" y="1024" width="37" height="37"/><rect x="1827" y="1024" width="37" height="37"/><rect x="1900" y="1024" width="37" height="37"/><rect x="1973" y="1024" width="37" height="37"/><rect x="2046" y="1024" width="2" height="37"/><rect x="0" y="1061" width="1" height="37"/><rect x="38" y="1061" width="36" height="37"/><rect x="111" y="1061" width="36" height="37"/><rect x="184" y="1061" width="36" height="37"/><rect x="257" y="1061" width="36" height="37"/><rect x="330" y="1061" width="36" height="37"/><rect x="403" y="1061" width="36" height="37"/><rect x="476" y="1061" width="36" height="37"/><rect x="549" y="1061" width="37" height="37"/><rect x="622" y="1061" width="37" height="37"/><rect x="695" y="1061" width="37" height="37"/><rect x="768" y="1061" width="37" height="37"/><rect x="841" y="1061" width="37" height="37"/><rect x="914" y="1061" width="37" height="37"/><rect x="987" y="1061" width="37" height="37"/><rect x="1060" y="1061" width="37" height="37"/><rect x="1133" y="1061" width="37" height="37"/><rect x="1206" y="1061" width="37" height="37"/><rect x="1279" y="1061" width="37" height="37"/><rect x="1352" y="1061" width="37" height="37"/><rect x="1425" y="1061" width="37" height="37"/><rect x="1499" y="1061" width="36" height="37"/><rect x="1572" y="1061" width="36" height="37"/><rect x="1645" y="1061" width="36" height="37"/><rect x="1718" y="1061" width="36" height="37"/><rect x="1791" y="1061" width="36" height="37"/><rect x="1864" y="1061" width="36" height="37"/><rect x="1937" y="1061" width="36" height="37"/><rect x="2010" y="1061" width="36" height="37"/><rect x="1" y="1098" width="37" height="36"/><rect x="74" y="1098" width="37" height="36"/><rect x="147" y="1098" width="37" height="36"/><rect x="220" y="1098" width="37" height="36"/><rect x="293" y="1098" width="37" height="36"/><rect x="366" y="1098" width="37" height="36"/><rect x="439" y="1098" width="37" height="36"/><rect x="512" y="1098" width="37" height="36"/><rect x="586" y="1098" width="36" height="36"/><rect x="659" y="1098" width="36" height="36"/><rect x="732" y="1098" width="36" height="36"/><rect x="805" y="1098" width="36" height="36"/><rect x="878" y="1098" width="36" height="36"/><rect x="951" y="1098" width="36" height="36"/><rect x="1024" y="1098" width="36" height="36"/><rect x="1097" y="1098" width="36" height="36"/><rect x="1170" y="1098" width="36" height="36"/><rect x="1243" y="1098" width="36" height="36"/><rect x="1316" y="1098" width="36" height="36"/><rect x="1389" y="1098" width="36" height="36"/><rect x="1462" y="1098" width="37" height="36"/><rect x="1535" y="1098" width="37" height="36"/><rect x="1608" y="1098" width="37" height="36"/><rect x="1681" y="1098" width="37" height="36"/><rect x="1754" y="1098" width="37" height="36"/><rect x="1827" y="1098" width="37" height="36"/><rect x="1900" y="1098" width="37" height="36"/><rect x="1973" y="1098" width="37" height="36"/><rect x="2046" y="1098" width="2" height="36"/><rect x="0" y="1134" width="1" height="37"/><rect x="38" y="1134" width="36" height="37"/><rect x="111" y="1134" width="36" height="37"/><rect x="184" y="1134" width="36" height="37"/><rect x="257" y="1134" width="36" height="37"/><rect x="330" y="1134" width="36" height="37"/><rect x="403" y="1134" width="36" height="37"/><rect x="476" y="1134" width="36" height="37"/><rect x="549" y="1134" width="37" height="37"/><rect x="622" y="1134" width="37" height="37"/><rect x="695" y="1134" width="37" height="37"/><rect x="768" y="1134" width="37" height="37"/><rect x="841" y="1134" width="37" height="37"/><rect x="914" y="1134" width="37" height="37"/><rect x="987" y="1134" width="37" height="37"/><rect x="1060" y="1134" width="37" height="37"/><rect x="1133" y="1134" width="37" height="37"/><rect x="1206" y="1134" width="37" height="37"/><rect x="1279" y="1134" width="37" height="37"/><rect x="1352" y="1134" width="37" height="37"/><rect x="1425" y="1134" width="37" height="37"/><rect x="1499" y="1134" width="36" height="37"/><rect x="1572" y="1134" width="36" height="37"/><rect x="1645" y="1134" width="36" height="37"/><rect x="1718" y="1134" width="36" height="37"/><rect x="1791" y="1134" width="36" height="37"/><rect x="1864" y="1134" width="36" height="37"/><rect x="1937" y="1134" width="36" height="37"/><rect x="2010" y="1134" width="36" height="37"/><rect x="1" y="1171" width="37" height="36"/><rect x="74" y="1171" width="37" height="36"/><rect x="147" y="1171" width="37" height="36"/><rect x="220" y="1171" width="37" height="36"/><rect x="293" y="1171" width="37" height="36"/><rect x="366" y="1171" width="37" height="36"/><rect x="439" y="1171" width="37" height="36"/><rect x="512" y="1171" width="37" height="36"/><rect x="586" y="1171" width="36" height="36"/><rect x="659" y="1171" width="36" height="36"/><rect x="732" y="1171" width="36" height="36"/><rect x="805" y="1171" width="36" height="36"/><rect x="878" y="1171" width="36" height="36"/><rect x="951" y="1171" width="36" height="36"/><rect x="1024" y="1171" width="36" height="36"/><rect x="1097" y="1171" width="36" height="36"/><rect x="1170" y="1171" width="36" height="36"/><rect x="1243" y="1171" width="36" height="36"/><rect x="1316" y="1171" width="36" height="36"/><rect x="1389" y="1171" width="36" height="36"/><rect x="1462" y="1171" width="37" height="36"/><rect x="1535" y="1171" width="37" height="36"/><rect x="1608" y="1171" width="37" height="36"/><rect x="1681" y="1171" width="37" height="36"/><rect x="1754" y="1171" width="37" height="36"/><rect x="1827" y="1171" width="37" height="36"/><rect x="1900" y="1171" width="37" height="36"/><rect x="1973" y="1171" width="37" height="36"/><rect x="2046" y="1171" width="2" height="36"/><rect x="0" y="1207" width="1" height="37"/><rect x="38" y="1207" width="36" height="37"/><rect x="111" y="1207" width="36" height="37"/><rect x="184" y="1207" width="36" height="37"/><rect x="257" y="1207" width="36" height="37"/><rect x="330" y="1207" width="36" height="37"/><rect x="403" y="1207" width="36" height="37"/><rect x="476" y="1207" width="36" height="37"/><rect x="549" y="1207" width="37" height="37"/><rect x="622" y="1207" width="37" height="37"/><rect x="695" y="1207" width="37" height="37"/><rect x="768" y="1207" width="37" height="37"/><rect x="841" y="1207" width="37" height="37"/><rect x="914" y="1207" width="37" height="37"/><rect x="987" y="1207" width="37" height="37"/><rect x="1060" y="1207" width="37" height="37"/><rect x="1133" y="1207" width="37" height="37"/><rect x="1206" y="1207" width="37" height="37"/><rect x="1279" y="1207" width="37" height="37"/><rect x="1352" y="1207" width="37" height="37"/><rect x="1425" y="1207" width="37" height="37"/><rect x="1499" y="1207" width="36" height="37"/><rect x="1572" y="1207" width="36" height="37"/><rect x="1645" y="1207" width="36" height="37"/><rect x="1718" y="1207" width="36" height="37"/><rect x="1791" y="1207" width="36" height="37"/><rect x="1864" y="1207" width="36" height="37"/><rect x="1937" y="1207" width="36" height="37"/><rect x="2010" y="1207" width="36" height="37"/><rect x="1" y="1244" width="37" height="36"/><rect x="74" y="1244" width="37" height="36"/><rect x="147" y="1244" width="37" height="36"/><rect x="220" y="1244" width="37" height="36"/><rect x="293" y="1244" width="37" height="36"/><rect x="366" y="1244" width="37" height="36"/><rect x="439" y="1244" width="37" height="36"/><rect x="512" y="1244" width="37" height="36"/><rect x="586" y="1244" width="36" height="36"/><rect x="659" y="1244" width="36" height="36"/><rect x="732" y="1244" width="36" height="36"/><rect x="805" y="1244" width="36" height="36"/><rect x="878" y="1244" width="36" height="36"/><rect x="951" y="1244" width="36" height="36"/><rect x="1024" y="1244" width="36" height="36"/><rect x="1097" y="1244" width="36" height="36"/><rect x="1170" y="1244" width="36" height="36"/><rect x="1243" y="1244" width="36" height="36"/><rect x="1316" y="1244" width="36" height="36"/><rect x="1389" y="1244" width="36" height="36"/><rect x="1462" y="1244" width="37" height="36"/><rect x="1535" y="1244" width="37" height="36"/><rect x="1608" y="1244" width="37" height="36"/><rect x="1681" y="1244" width="37" height="36"/><rect x="1754" y="1244" width="37" height="36"/><rect x="1827" y="1244" width="37" height="36"/><rect x="1900" y="1244" width="37" height="36"/><rect x="1973" y="1244" width="37" height="36"/><rect x="2046" y="1244" width="2" height="36"/><rect x="0" y="1280" width="1" height="37"/><rect x="38" y="1280" width="36" height="37"/><rect x="111" y="1280" width="36" height="37"/><rect x="184" y="1280" width="36" height="37"/><rect x="257" y="1280" width="36" height="37"/><rect x="330" y="1280" width="36" height="37"/><rect x="403" y="1280" width="36" height="37"/><rect x="476" y="1280" width="36" height="37"/><rect x="549" y="1280" width="37" height="37"/><rect x="622" y="1280" width="37" height="37"/><rect x="695" y="1280" width="37" height="37"/><rect x="768" y="1280" width="37" height="37"/><rect x="841" y="1280" width="37" height="37"/><rect x="914" y="1280" width="37" height="37"/><rect x="987" y="1280" width="37" height="37"/><rect x="1060" y="1280" width="37" height="37"/><rect x="1133" y="1280" width="37" height="37"/><rect x="1206" y="1280" width="37" height="37"/><rect x="1279" y="1280" width="37" height="37"/><rect x="1352" y="1280" width="37" height="37"/><rect x="1425" y="1280" width="37" height="37"/><rect x="1499" y="1280" width="36" height="37"/><rect x="1572" y="1280" width="36" height="37"/><rect x="1645" y="1280" width="36" height="37"/><rect x="1718" y="1280" width="36" height="37"/><rect x="1791" y="1280" width="36" height="37"/><rect x="1864" y="1280" width="36" height="37"/><rect x="1937" y="1280" width="36" height="37"/><rect x="2010" y="1280" width="36" height="37"/><rect x="1" y="1317" width="37" height="36"/><rect x="74" y="1317" width="37" height="36"/><rect x="147" y="1317" width="37" height="36"/><rect x="220" y="1317" width="37" height="36"/><rect x="293" y="1317" width="37" height="36"/><rect x="366" y="1317" width="37" height="36"/><rect x="439" y="1317" width="37" height="36"/><rect x="512" y="1317" width="37" height="36"/><rect x="586" y="1317" width="36" height="36"/><rect x="659" y="1317" width="36" height="36"/><rect x="732" y="1317" width="36" height="36"/><rect x="805" y="1317" width="36" height="36"/><rect x="878" y="1317" width="36" height="36"/><rect x="951" y="1317" width="36" height="36"/><rect x="1024" y="1317" width="36" height="36"/><rect x="1097" y="1317" width="36" height="36"/><rect x="1170" y="1317" width="36" height="36"/><rect x="1243" y="1317" width="36" height="36"/><rect x="1316" y="1317" width="36" height="36"/><rect x="1389" y="1317" width="36" height="36"/><rect x="1462" y="1317" width="37" height="36"/><rect x="1535" y="1317" width="37" height="36"/><rect x="1608" y="1317" width="37" height="36"/><rect x="1681" y="1317" width="37" height="36"/><rect x="1754" y="1317" width="37" height="36"/><rect x="1827" y="1317" width="37" height="36"/><rect x="1900" y="1317" width="37" height="36"/><rect x="1973" y="1317" width="37" height="36"/><rect x="2046" y="1317" width="2" height="36"/><rect x="0" y="1353" width="1" height="37"/><rect x="38" y="1353" width="36" height="37"/><rect x="111" y="1353" width="36" height="37"/><rect x="184" y="1353" width="36" height="37"/><rect x="257" y="1353" width="36" height="37"/><rect x="330" y="1353" width="36" height="37"/><rect x="403" y="1353" width="36" height="37"/><rect x="476" y="1353" width="36" height="37"/><rect x="549" y="1353" width="37" height="37"/><rect x="622" y="1353" width="37" height="37"/><rect x="695" y="1353" width="37" height="37"/><rect x="768" y="1353" width="37" height="37"/><rect x="841" y="1353" width="37" height="37"/><rect x="914" y="1353" width="37" height="37"/><rect x="987" y="1353" width="37" height="37"/><rect x="1060" y="1353" width="37" height="37"/><rect x="1133" y="1353" width="37" height="37"/><rect x="1206" y="1353" width="37" height="37"/><rect x="1279" y="1353" width="37" height="37"/><rect x="1352" y="1353" width="37" height="37"/><rect x="1425" y="1353" width="37" height="37"/><rect x="1499" y="1353" width="36" height="37"/><rect x="1572" y="1353" width="36" height="37"/><rect x="1645" y="1353" width="36" height="37"/><rect x="1718" y="1353" width="36" height="37"/><rect x="1791" y="1353" width="36" height="37"/><rect x="1864" y="1353" width="36" height="37"/><rect x="1937" y="1353" width="36" height="37"/><rect x="2010" y="1353" width="36" height="37"/><rect x="1" y="1390" width="37" height="36"/><rect x="74" y="1390" width="37" height="36"/><rect x="147" y="1390" width="37" height="36"/><rect x="220" y="1390" width="37" height="36"/><rect x="293" y="1390" width="37" height="36"/><rect x="366" y="1390" width="37" height="36"/><rect x="439" y="1390" width="37" height="36"/><rect x="512" y="1390" width="37" height="36"/><rect x="586" y="1390" width="36" height="36"/><rect x="659" y="1390" width="36" height="36"/><rect x="732" y="1390" width="36" height="36"/><rect x="805" y="1390" width="36" height="36"/><rect x="878" y="1390" width="36" height="36"/><rect x="951" y="1390" width="36" height="36"/><rect x="1024" y="1390" width="36" height="36"/><rect x="1097" y="1390" width="36" height="36"/><rect x="1170" y="1390" width="36" height="36"/><rect x="1243" y="1390" width="36" height="36"/><rect x="1316" y="1390" width="36" height="36"/><rect x="1389" y="1390" width="36" height="36"/><rect x="1462" y="1390" width="37" height="36"/><rect x="1535" y="1390" width="37" height="36"/><rect x="1608" y="1390" width="37" height="36"/><rect x="1681" y="1390" width="37" height="36"/><rect x="1754" y="1390" width="37" height="36"/><rect x="1827" y="1390" width="37" height="36"/><rect x="1900" y="1390" width="37" height="36"/><rect x="1973" y="1390" width="37" height="36"/><rect x="2046" y="1390" width="2" height="36"/><rect x="0" y="1426" width="1" height="22"/><rect x="38" y="1426" width="36" height="22"/><rect x="111" y="1426" width="36" height="22"/><rect x="184" y="1426" width="36" height="22"/><rect x="257" y="1426" width="36" height="22"/><rect x="330" y="1426" width="36" height="22"/><rect x="403" y="1426" width="36" height="22"/><rect x="476" y="1426" width="36" height="22"/><rect x="549" y="1426" width="37" height="22"/><rect x="622" y="1426" width="37" height="22"/><rect x="695" y="1426" width="37" height="22"/><rect x="768" y="1426" width="37" height="22"/><rect x="841" y="1426" width="37" height="22"/><rect x="914" y="1426" width="37" height="22"/><rect x="987" y="1426" width="37" height="22"/><rect x="1060" y="1426" width="37" height="22"/><rect x="1133" y="1426" width="37" height="22"/><rect x="1206" y="1426" width="37" height="22"/><rect x="1279" y="1426" width="37" height="22"/><rect x="1352" y="1426" width="37" height="22"/><rect x="1425" y="1426" width="37" height="22"/><rect x="1499" y="1426" width="36" height="22"/><rect x="1572" y="1426" width="36" height="22"/><rect x="1645" y="1426" width="36" height="22"/><rect x="1718" y="1426" width="36" height="22"/><rect x="1791" y="1426" width="36" height="22"/><rect x="1864" y="1426" width="36" height="22"/><rect x="1937" y="1426" width="36" height="22"/><rect x="2010" y="1426" width="36" height="22"/></g>
<rect x="805" y="258" width="219" height="36" fill="#020400"/><rect x="768" y="294" width="37" height="37" fill="#020400"/><rect x="805" y="294" width="36" height="37" fill="#9a93aa"/><rect x="841" y="294" width="37" height="37" fill="#cbc8dd"/><rect x="878" y="294" width="73" height="37" fill="#fbfaff"/><rect x="951" y="294" width="36" height="37" fill="#cbc8dd"/><rect x="987" y="294" width="37" height="37" fill="#9a93aa"/><rect x="1024" y="294" width="36" height="37" fill="#020400"/><rect x="732" y="331" width="36" height="36" fill="#020400"/><rect x="768" y="331" width="37" height="36" fill="#cbc8dd"/><rect x="805" y="331" width="219" height="36" fill="#fbfaff"/><rect x="1024" y="331" width="36" height="36" fill="#cbc8dd"/><rect x="1060" y="331" width="37" height="36" fill="#020400"/><rect x="695" y="367" width="37" height="37" fill="#020400"/><rect x="732" y="367" width="36" height="37" fill="#9a93aa"/><rect x="768" y="367" width="37" height="37" fill="#e8eafb"/><rect x="805" y="367" width="219" height="37" fill="#fbfaff"/><rect x="1024" y="367" width="36" height="37" fill="#e8eafb"/><rect x="1060" y="367" width="37" height="37" fill="#9a93aa"/><rect x="1097" y="367" width="36" height="37" fill="#020400"/><rect x="659" y="404" width="36" height="36" fill="#020400"/><rect x="695" y="404" width="37" height="36" fill="#9a93aa"/><rect x="732" y="404" width="36" height="36" fill="#cbc8dd"/><rect x="768" y="404" width="73" height="36" fill="#e8eafb"/><rect x="841" y="404" width="146" height="36" fill="#fbfaff"/><rect x="987" y="404" width="73" height="36" fill="#e8eafb"/><rect x="1060" y="404" width="37" height="36" fill="#cbc8dd"/><rect x="1097" y="404" width="36" height="36" fill="#9a93aa"/><rect x="1133" y="404" width="37" height="36" fill="#020400"/><rect x="659" y="440" width="36" height="37" fill="#2e0c15"/><rect x="695" y="440" width="73" height="37" fill="#cbc8dd"/><rect x="768" y="440" width="292" height="37" fill="#e8eafb"/><rect x="1060" y="440" width="73" height="37" fill="#cbc8dd"/><rect x="1133" y="440" width="37" height="37" fill="#2e0c15"/><rect x="622" y="477" width="37" height="36" fill="#020400"/><rect x="659" y="477" width="36" height="36" fill="#9a93aa"/><rect x="695" y="477" width="73" height="36" fill="#cbc8dd"/><rect x="768" y="477" width="292" height="36" fill="#e8eafb"/><rect x="1060" y="477" width="73" height="36" fill="#cbc8dd"/><rect x="1133" y="477" width="37" height="36" fill="#9a93aa"/><rect x="1170" y="477" width="36" height="36" fill="#020400"/><rect x="622" y="513" width="37" height="37" fill="#2e0c15"/><rect x="659" y="513" width="36" height="37" fill="#ffd500"/><rect x="695" y="513" width="37" height="37" fill="#e8eafb"/><rect x="732" y="513" width="73" height="37" fill="#cbc8dd"/><rect x="805" y="513" width="219" height="37" fill="#e8eafb"/><rect x="1024" y="513" width="73" height="37" fill="#cbc8dd"/><rect x="1097" y="513" width="36" height="37" fill="#e8eafb"/><rect x="1133" y="513" width="37" height="37" fill="#ffd500"/><rect x="1170" y="513" width="36" height="37" fill="#2e0c15"/><rect x="586" y="550" width="36" height="36" fill="#020400"/><rect x="622" y="550" width="37" height="36" fill="#6b1200"/><rect x="659" y="550" width="36" height="36" fill="#d55500"/><rect x="695" y="550" width="37" height="36" fill="#ffd500"/><rect x="732" y="550" width="365" height="36" fill="#e8eafb"/><rect x="1097" y="550" width="36" height="36" fill="#ffd500"/><rect x="1133" y="550" width="37" height="36" fill="#ff6600"/><rect x="1170" y="550" width="36" height="36" fill="#6b1200"/><rect x="1206" y="550" width="37" height="36" fill="#020400"/><rect x="586" y="586" width="36" height="37" fill="#2e0c15"/><rect x="622" y="586" width="73" height="37" fill="#993300"/><rect x="695" y="586" width="73" height="37" fill="#ff6600"/><rect x="768" y="586" width="73" height="37" fill="#ffd500"/><rect x="841" y="586" width="146" height="37" fill="#e8eafb"/><rect x="987" y="586" width="73" height="37" fill="#ffd500"/><rect x="1060" y="586" width="73" height="37" fill="#ff6600"/><rect x="1133" y="586" width="73" height="37" fill="#993300"/><rect x="1206" y="586" width="37" height="37" fill="#2e0c15"/><rect x="549" y="623" width="37" height="36" fill="#020400"/><rect x="586" y="623" width="36" height="36" fill="#6b1200"/><rect x="622" y="623" width="37" height="36" fill="#993300"/><rect x="659" y="623" width="109" height="36" fill="#d55500"/><rect x="768" y="623" width="292" height="36" fill="#ff6600"/><rect x="1060" y="623" width="110" height="36" fill="#d55500"/><rect x="1170" y="623" width="36" height="36" fill="#993300"/><rect x="1206" y="623" width="37" height="36" fill="#6b1200"/><rect x="1243" y="623" width="36" height="36" fill="#020400"/><rect x="549" y="659" width="37" height="37" fill="#020400"/><rect x="586" y="659" width="36" height="37" fill="#6b1200"/><rect x="622" y="659" width="37" height="37" fill="#993300"/><rect x="659" y="659" width="109" height="37" fill="#d55500"/><rect x="768" y="659" width="292" height="37" fill="#ff6600"/><rect x="1060" y="659" width="110" height="37" fill="#d55500"/><rect x="1170" y="659" width="36" height="37" fill="#993300"/><rect x="1206" y="659" width="37" height="37" fill="#6b1200"/><rect x="1243" y="659" width="36" height="37" fill="#020400"/><rect x="549" y="696" width="37" height="36" fill="#2e0c15"/><rect x="586" y="696" width="73" height="36" fill="#993300"/><rect x="659" y="696" width="109" height="36" fill="#d55500"/><rect x="768" y="696" width="292" height="36" fill="#ff6600"/><rect x="1060" y="696" width="110" height="36" fill="#d55500"/><rect x="1170" y="696" width="73" height="36" fill="#993300"/><rect x="1243" y="696" width="36" height="36" fill="#2e0c15"/><rect x="549" y="732" width="37" height="37" fill="#2e0c15"/><rect x="586" y="732" width="73" height="37" fill="#993300"/><rect x="659" y="732" width="109" height="37" fill="#d55500"/><rect x="768" y="732" width="292" height="37" fill="#ff6600"/><rect x="1060" y="732" width="110" height="37" fill="#d55500"/><rect x="1170" y="732" width="73" height="37" fill="#993300"/><rect x="1243" y="732" width="36" height="37" fill="#2e0c15"/><rect x="512" y="769" width="37" height="36" fill="#020400"/><rect x="549" y="769" width="37" height="36" fill="#d55500"/><rect x="586" y="769" width="73" height="36" fill="#993300"/><rect x="659" y="769" width="109" height="36" fill="#d55500"/><rect x="768" y="769" width="292" height="36" fill="#ff6600"/><rect x="1060" y="769" width="110" height="36" fill="#d55500"/><rect x="1170" y="769" width="73" height="36" fill="#993300"/><rect x="1243" y="769" width="36" height="36" fill="#d55500"/><rect x="1279" y="769" width="37" height="36" fill="#020400"/><rect x="512" y="805" width="37" height="37" fill="#020400"/><rect x="549" y="805" width="37" height="37" fill="#ff6600"/><rect x="586" y="805" width="73" height="37" fill="#993300"/><rect x="659" y="805" width="109" height="37" fill="#d55500"/><rect x="768" y="805" width="292" height="37" fill="#ff6600"/><rect x="1060" y="805" width="110" height="37" fill="#d55500"/><rect x="1170" y="805" width="73" height="37" fill="#993300"/><rect x="1243" y="805" width="36" height="37" fill="#ff6600"/><rect x="1279" y="805" width="37" height="37" fill="#020400"/><rect x="512" y="842" width="37" height="36" fill="#2e0c15"/><rect x="549" y="842" width="37" height="36" fill="#ffaa00"/><rect x="586" y="842" width="36" height="36" fill="#ff6600"/><rect x="622" y="842" width="73" height="36" fill="#993300"/><rect x="695" y="842" width="73" height="36" fill="#d55500"/><rect x="768" y="842" width="292" height="36" fill="#ff6600"/><rect x="1060" y="842" width="110" height="36" fill="#d55500"/><rect x="1170" y="842" width="36" height="36" fill="#993300"/><rect x="1206" y="842" width="37" height="36" fill="#ff6600"/><rect x="1243" y="842" width="36" height="36" fill="#ffaa00"/><rect x="1279" y="842" width="37" height="36" fill="#2e0c15"/><rect x="512" y="878" width="37" height="37" fill="#2e0c15"/><rect x="549" y="878" width="37" height="37" fill="#dba507"/><rect x="586" y="878" width="36" height="37" fill="#ffaa00"/><rect x="622" y="878" width="73" height="37" fill="#ff6600"/><rect x="695" y="878" width="110" height="37" fill="#d55500"/><rect x="805" y="878" width="219" height="37" fill="#ff6600"/><rect x="1024" y="878" width="109" height="37" fill="#d55500"/><rect x="1133" y="878" width="73" height="37" fill="#ff6600"/><rect x="1206" y="878" width="37" height="37" fill="#ffaa00"/><rect x="1243" y="878" width="36" height="37" fill="#dba507"/><rect x="1279" y="878" width="37" height="37" fill="#2e0c15"/><rect x="476" y="915" width="36" height="36" fill="#020400"/><rect x="512" y="915" width="37" height="36" fill="#7a300c"/><rect x="549" y="915" width="37" height="36" fill="#a85c10"/><rect x="586" y="915" width="73" height="36" fill="#ffd500"/><rect x="659" y="915" width="36" height="36" fill="#ffaa00"/><rect x="695" y="915" width="37" height="36" fill="#ff8c00"/><rect x="732" y="915" width="365" height="36" fill="#ff6600"/><rect x="1097" y="915" width="36" height="36" fill="#ff8c00"/><rect x="1133" y="915" width="37" height="36" fill="#ffaa00"/><rect x="1170" y="915" width="73" height="36" fill="#ffd500"/><rect x="1243" y="915" width="36" height="36" fill="#a85c10"/><rect x="1279" y="915" width="37" height="36" fill="#7a300c"/><rect x="1316" y="915" width="36" height="36" fill="#020400"/><rect x="476" y="951" width="36" height="37" fill="#020400"/><rect x="512" y="951" width="37" height="37" fill="#7a300c"/><rect x="549" y="951" width="73" height="37" fill="#a85c10"/><rect x="622" y="951" width="37" height="37" fill="#dba507"/><rect x="659" y="951" width="511" height="37" fill="#ffd500"/><rect x="1170" y="951" width="36" height="37" fill="#dba507"/><rect x="1206" y="951" width="73" height="37" fill="#a85c10"/><rect x="1279" y="951" width="37" height="37" fill="#7a300c"/><rect x="1316" y="951" width="36" height="37" fill="#020400"/><rect x="476" y="988" width="36" height="36" fill="#020400"/><rect x="512" y="988" width="74" height="36" fill="#a85c10"/><rect x="586" y="988" width="182" height="36" fill="#dba507"/><rect x="768" y="988" width="292" height="36" fill="#ffd500"/><rect x="1060" y="988" width="183" height="36" fill="#dba507"/><rect x="1243" y="988" width="73" height="36" fill="#a85c10"/><rect x="1316" y="988" width="36" height="36" fill="#020400"/><rect x="476" y="1024" width="36" height="37" fill="#020400"/><rect x="512" y="1024" width="74" height="37" fill="#a85c10"/><rect x="586" y="1024" width="146" height="37" fill="#dba507"/><rect x="732" y="1024" width="365" height="37" fill="#ffd500"/><rect x="1097" y="1024" width="146" height="37" fill="#dba507"/><rect x="1243" y="1024" width="73" height="37" fill="#a85c10"/><rect x="1316" y="1024" width="36" height="37" fill="#020400"/><rect x="476" y="1061" width="36" height="37" fill="#020400"/><rect x="512" y="1061" width="74" height="37" fill="#a85c10"/><rect x="586" y="1061" width="146" height="37" fill="#dba507"/><rect x="732" y="1061" width="365" height="37" fill="#ffd500"/><rect x="1097" y="1061" width="146" height="37" fill="#dba507"/><rect x="1243" y="1061" width="73" height="37" fill="#a85c10"/><rect x="1316" y="1061" width="36" height="37" fill="#020400"/><rect x="476" y="1098" width="36" height="36" fill="#020400"/><rect x="512" y="1098" width="74" height="36" fill="#a85c10"/><rect x="586" y="1098" width="146" height="36" fill="#dba507"/><rect x="732" y="1098" width="365" height="36" fill="#ffd500"/><rect x="1097" y="1098" width="146" height="36" fill="#dba507"/><rect x="1243" y="1098" width="73" height="36" fill="#a85c10"/><rect x="1316" y="1098" width="36" height="36" fill="#020400"/><rect x="476" y="1134" width="36" height="37" fill="#020400"/><rect x="512" y="1134" width="37" height="37" fill="#7a300c"/><rect x="549" y="1134" width="37" height="37" fill="#a85c10"/><rect x="586" y="1134" width="146" height="37" fill="#dba507"/><rect x="732" y="1134" width="365" height="37" fill="#ffd500"/><rect x="1097" y="1134" width="146" height="37" fill="#dba507"/><rect x="1243" y="1134" width="36" height="37" fill="#a85c10"/><rect x="1279" y="1134" width="37" height="37" fill="#7a300c"/><rect x="1316" y="1134" width="36" height="37" fill="#020400"/><rect x="476" y="1171" width="36" height="36" fill="#020400"/><rect x="512" y="1171" width="37" height="36" fill="#7a300c"/><rect x="549" y="1171" width="37" height="36" fill="#a85c10"/><rect x="586" y="1171" width="146" height="36" fill="#dba507"/><rect x="732" y="1171" width="365" height="36" fill="#ffd500"/><rect x="1097" y="1171" width="146" height="36" fill="#dba507"/><rect x="1243" y="1171" width="36" height="36" fill="#a85c10"/><rect x="1279" y="1171" width="37" height="36" fill="#7a300c"/><rect x="1316" y="1171" width="36" height="36" fill="#020400"/><rect x="512" y="1207" width="37" height="37" fill="#020400"/><rect x="549" y="1207" width="37" height="37" fill="#7a300c"/><rect x="586" y="1207" width="36" height="37" fill="#a85c10"/><rect x="622" y="1207" width="110" height="37" fill="#dba507"/><rect x="732" y="1207" width="365" height="37" fill="#ffd500"/><rect x="1097" y="1207" width="109" height="37" fill="#dba507"/><rect x="1206" y="1207" width="37" height="37" fill="#a85c10"/><rect x="1243" y="1207" width="36" height="37" fill="#7a300c"/><rect x="1279" y="1207" width="37" height="37" fill="#020400"/><rect x="549" y="1244" width="37" height="36" fill="#020400"/><rect x="586" y="1244" width="36" height="36" fill="#2e0c15"/><rect x="622" y="1244" width="37" height="36" fill="#7a300c"/><rect x="659" y="1244" width="73" height="36" fill="#a85c10"/><rect x="732" y="1244" width="36" height="36" fill="#dba507"/><rect x="768" y="1244" width="292" height="36" fill="#ffd500"/><rect x="1060" y="1244" width="37" height="36" fill="#dba507"/><rect x="1097" y="1244" width="73" height="36" fill="#a85c10"/><rect x="1170" y="1244" width="36" height="36" fill="#7a300c"/><rect x="1206" y="1244" width="37" height="36" fill="#2e0c15"/><rect x="1243" y="1244" width="36" height="36" fill="#020400"/><rect x="622" y="1280" width="584" height="37" fill="#020400"/>
</svg>
<div id="lpanel" class="a"></div>
<div id="rpanel" class="a"></div>
<div id="selbtn" class="a"></div>
<div id="sw0" class="a"><svg width="80" height="80" viewBox="0 0 80 80" style="display:block"><rect width="80" height="80" fill="#fff"/><path d="M0,0 H80 V13 L0,69.5 Z" fill="#a85c10"/></svg></div>
<div class="sw" style="top:296px;background:#fdf9f8"></div><div class="sw" style="top:404px;background:#030400"></div><div class="sw" style="top:512px;background:#383838"></div><div class="sw" style="top:620px;background:#6e6e6e"></div><div class="sw" style="top:728px;background:#a1a1a1"></div><div class="sw" style="top:836px;background:#d3d3d3"></div><div class="sw" style="top:944px;background:#f59090"></div><div class="sw" style="top:1052px;background:#e00c0c"></div><div class="sw" style="top:1160px;background:#6b0010"></div><div class="sw" style="top:1268px;background:#4a331d"></div>
<div id="toolbar" class="a"></div>
<div id="seg1" class="a"><div class="sg sb" style="left:1px;width:94px;border-radius:8px 0 0 8px"></div><div class="sg" style="left:97px;width:100px"></div><div class="sg" style="left:199px;width:98px"></div><div class="sg" style="left:299px;width:100px"></div><div class="sg" style="left:401px;width:98px"></div><div class="sg" style="left:501px;width:96px;border-radius:0 8px 8px 0"></div></div><div id="seg2" class="a"><div class="sg sb" style="left:1px;width:94px;border-radius:8px 0 0 8px"></div><div class="sg" style="left:97px;width:100px"></div><div class="sg" style="left:199px;width:98px"></div><div class="sg" style="left:299px;width:98px;border-radius:0 8px 8px 0"></div></div>
<svg class="a" style="left:0;top:1440px" width="2048" height="96" viewBox="0 1440 2048 96">
<defs>
<filter id="eng" x="-20%" y="-20%" width="140%" height="140%"><feOffset in="SourceAlpha" dy="-2" result="o"/><feFlood flood-color="#111" flood-opacity="0.85"/><feComposite in2="o" operator="in" result="s"/><feMerge><feMergeNode in="s"/><feMergeNode in="SourceGraphic"/></feMerge></filter>
<filter id="engb" x="-20%" y="-20%" width="140%" height="140%"><feOffset in="SourceAlpha" dy="-2" result="o"/><feFlood flood-color="#001a4d" flood-opacity="1"/><feComposite in2="o" operator="in" result="s"/><feMerge><feMergeNode in="s"/><feMergeNode in="SourceGraphic"/></feMerge></filter>
<filter id="hal" x="-20%" y="-20%" width="140%" height="140%"><feMorphology in="SourceAlpha" operator="dilate" radius="1.4" result="d"/><feGaussianBlur in="d" stdDeviation="0.6" result="b"/><feFlood flood-color="#161616" flood-opacity="0.95"/><feComposite in2="b" operator="in" result="s"/><feMerge><feMergeNode in="s"/><feMergeNode in="SourceGraphic"/></feMerge></filter>
<filter id="sqs" x="-20%" y="-20%" width="140%" height="140%"><feGaussianBlur in="SourceAlpha" stdDeviation="0.8" result="b"/><feFlood flood-color="#001030" flood-opacity="0.9"/><feComposite in2="b" operator="in" result="s"/><feMerge><feMergeNode in="s"/><feMergeNode in="SourceGraphic"/></feMerge></filter>
</defs>
<g filter="url(#engb)"><rect x="529.8" y="1477.9" width="40.2" height="30.2" fill="none" stroke="#fff" stroke-width="3.8"/></g>
<g filter="url(#eng)" fill="none" stroke="#fff">
<ellipse cx="647.9" cy="1492.8" rx="21.1" ry="15.2" stroke-width="3.8"/>
</g>
<g filter="url(#eng)"><g transform="translate(720,1465) scale(0.078125)">
<ellipse cx="390" cy="300" rx="248" ry="168" transform="rotate(-18 390 300)" fill="none" stroke="#fff" stroke-width="55"/>
<circle cx="235" cy="488" r="62" fill="none" stroke="#fff" stroke-width="48"/>
<path d="M200,540 Q165,570 110,572 Q150,612 230,585 Z" fill="#fff"/>
</g></g>
<g filter="url(#eng)"><g transform="translate(720,1465) scale(0.078125)">
<path d="M1505,462 L1405,197 L1450,152 L1700,267 L1928,174 L1928,440 L1625,517" fill="none" stroke="#fff" stroke-width="62" stroke-linejoin="miter"/>
<circle cx="1548" cy="515" r="62" fill="none" stroke="#fff" stroke-width="48"/>
<path d="M1515,568 Q1480,598 1425,600 Q1465,640 1545,612 Z" fill="#fff"/>
</g></g>
<g filter="url(#eng)"><g transform="translate(920,1465) scale(0.078125)">
<g transform="translate(198,578) rotate(-46.5)"><rect x="0" y="-38" width="600" height="76" rx="14" fill="none" stroke="#fff" stroke-width="17"/><rect x="350" y="-46.5" width="258" height="93" rx="20" fill="#fff"/></g>
<path d="M375,95 L390,140 L435,155 L390,170 L375,215 L360,170 L315,155 L360,140 Z" fill="#fff"/>
<path d="M610,300 L625,345 L670,360 L625,375 L610,420 L595,375 L550,360 L595,345 Z" fill="#fff"/>
<path d="M545,418 L560,463 L605,478 L560,493 L545,538 L530,493 L485,478 L530,463 Z" fill="#fff"/>
</g></g>
<g filter="url(#eng)"><g transform="translate(920,1465) scale(0.078125)">
<path d="M1475,235 C1445,175 1510,180 1585,187 C1655,185 1680,105 1740,112 C1805,122 1790,222 1832,228 C1880,202 1960,212 1955,282 C1950,342 1862,352 1792,392 C1782,422 1852,462 1842,522 C1822,602 1732,612 1672,542 C1642,512 1600,502 1552,532 C1502,572 1472,602 1420,582 C1360,552 1360,472 1390,432 C1420,382 1470,362 1492,322 C1492,282 1482,262 1475,235 Z" fill="#fff"/>
</g></g>
<g filter="url(#sqs)"><rect x="1192.7" y="1474.9" width="34.8" height="35.9" fill="#fff"/></g>
<g filter="url(#hal)" fill="#fff">
<path d="M1290.8,1475.9 H1315.4 V1485.7 H1325.2 V1510.3 H1300.6 V1500.2 H1290.8 Z"/>
</g>
<g filter="url(#hal)">
<rect x="1391.7" y="1475.9" width="24.6" height="24.3" fill="#fff"/>
<rect x="1401.9" y="1485.7" width="24.2" height="24.6" fill="#fff"/>
<rect x="1406.8" y="1490.6" width="14.4" height="14.4" fill="#4b4b4d" stroke="#1c1c1c" stroke-width="1.3"/>
</g>
<g filter="url(#hal)" fill="#fff">
<path fill-rule="evenodd" d="M1491.7,1475.9 H1516.3 V1500.2 H1491.7 Z M1496.2,1480.2 V1495.9 H1512 V1480.2 Z"/>
<path fill-rule="evenodd" d="M1501.9,1485.7 H1526.1 V1510.3 H1501.9 Z M1506.2,1490 V1505.6 H1521.8 V1490 Z"/>
<rect x="1501.9" y="1485.7" width="14.4" height="14.5"/>
</g>
</svg>
<svg class="a" style="left:0;top:0" width="2048" height="1536" viewBox="0 0 2048 1536">
<defs>
<filter id="sh" x="-30%" y="-30%" width="160%" height="160%"><feGaussianBlur in="SourceAlpha" stdDeviation="1.1" result="b"/><feComponentTransfer in="b" result="c"><feFuncA type="linear" slope="2.2"/></feComponentTransfer><feFlood flood-color="#000" flood-opacity="0.85"/><feComposite in2="c" operator="in" result="s"/><feMerge><feMergeNode in="s"/><feMergeNode in="SourceGraphic"/></feMerge></filter>
<filter id="sh2" x="-30%" y="-30%" width="160%" height="160%"><feGaussianBlur in="SourceAlpha" stdDeviation="0.9" result="b"/><feComponentTransfer in="b" result="c"><feFuncA type="linear" slope="1.8"/></feComponentTransfer><feFlood flood-color="#000" flood-opacity="0.6"/><feComposite in2="c" operator="in" result="s"/><feMerge><feMergeNode in="s"/><feMergeNode in="SourceGraphic"/></feMerge></filter>
<linearGradient id="gr" x1="0" y1="0" x2="1" y2="0"><stop offset="0" stop-color="#fff"/><stop offset="0.08" stop-color="#fff"/><stop offset="0.45" stop-color="#fff" stop-opacity="0.62"/><stop offset="0.75" stop-color="#7c7c7c" stop-opacity="0.4"/><stop offset="1" stop-color="#000" stop-opacity="0.22"/></linearGradient>
<linearGradient id="fsg" x1="0" y1="0" x2="0" y2="1"><stop offset="0" stop-color="#8a8a8a"/><stop offset="1" stop-color="#7a7a7a"/></linearGradient>
</defs>
<!-- selection tool -->
<g fill="#fff" filter="url(#sh)">
<rect x="33.8" y="202" width="8.4" height="4.4"/><rect x="33.8" y="202" width="4.4" height="8.4"/>
<rect x="77.8" y="202" width="8.4" height="4.4"/><rect x="81.8" y="202" width="4.4" height="8.4"/>
<rect x="33.8" y="250" width="8.4" height="4.4"/><rect x="33.8" y="246" width="4.4" height="8.4"/>
<rect x="77.8" y="250" width="8.4" height="4.4"/><rect x="81.8" y="246" width="4.4" height="8.4"/>
<rect x="45.7" y="202" width="4.3" height="4.4"/><rect x="53.9" y="202" width="4.3" height="4.4"/><rect x="62" y="202" width="4.3" height="4.4"/><rect x="70.1" y="202" width="4.3" height="4.4"/>
<rect x="45.7" y="250" width="4.3" height="4.4"/><rect x="53.9" y="250" width="4.3" height="4.4"/><rect x="62" y="250" width="4.3" height="4.4"/><rect x="70.1" y="250" width="4.3" height="4.4"/>
<rect x="33.8" y="214" width="4.4" height="4.2"/><rect x="33.8" y="222" width="4.4" height="4.2"/><rect x="33.8" y="230" width="4.4" height="4.2"/><rect x="33.8" y="238" width="4.4" height="4.2"/>
<rect x="81.8" y="214" width="4.4" height="4.2"/><rect x="81.8" y="222" width="4.4" height="4.2"/><rect x="81.8" y="230" width="4.4" height="4.2"/><rect x="81.8" y="238" width="4.4" height="4.2"/>
</g>
<!-- pencil -->
<g filter="url(#sh)"><g transform="translate(30.7,365) rotate(-45)">
<path d="M0,0 L6.3,-2.7 L6.3,2.7 Z" fill="#fff"/>
<path d="M7.6,-3.8 Q13.5,-6.2 18.6,-9 L18.6,9 Q13.5,6.2 7.6,3.7 Z" fill="#fff"/>
<rect x="20.3" y="-9" width="42.2" height="18" fill="#fff"/>
<path d="M63.8,-9 L69,-9 Q73.3,-9 73.3,-4.5 L73.3,4.5 Q73.3,9 69,9 L63.8,9 Z" fill="#fff"/>
<g stroke="#222" stroke-width="1.25"><line x1="24.6" y1="-4.3" x2="57.6" y2="-4.3"/><line x1="24.5" y1="0" x2="57.6" y2="0"/><line x1="24.4" y1="4.2" x2="57.6" y2="4.2"/></g>
</g></g>
<!-- brush -->
<g filter="url(#sh)"><g fill="#fff" transform="translate(20,405) scale(0.0520833)">
<path d="M750,678 L1250,262 Q1300,225 1310,250 Q1318,280 1295,310 L885,826 Z"/>
<path d="M725,703 L865,850 L752,990 L592,836 Z"/>
<path d="M570,852 C450,872 378,950 380,1040 C382,1120 320,1172 195,1185 C270,1245 400,1262 490,1252 C620,1238 708,1140 733,1012 Z"/>
</g></g>
<!-- flat brush -->
<g filter="url(#sh)"><g fill="#fff" transform="translate(20,513) scale(0.0520833)">
<path d="M565,775 Q880,500 1240,268 Q1300,222 1305,240 Q1310,265 1290,295 Q1050,620 760,958 Z"/>
<path d="M540,800 L722,982 L492,1280 L255,1042 Z"/>
<g stroke="#3a3a3a" stroke-width="9" opacity="0.7"><line x1="300" y1="1070" x2="470" y2="930"/><line x1="350" y1="1130" x2="520" y2="980"/><line x1="400" y1="1190" x2="560" y2="1060"/><line x1="450" y1="1240" x2="590" y2="1120"/></g>
</g></g>
<!-- spray -->
<g filter="url(#sh)"><g transform="translate(20,622) scale(0.0520833)">
<rect x="498" y="420" width="194" height="120" fill="#fff"/>
<rect x="345" y="575" width="505" height="695" fill="#fff"/>
<path d="M850,753 L557,753 L557,1130 L850,1130" fill="none" stroke="#2a2a2a" stroke-width="28"/>
<g stroke="#fff" stroke-width="34"><line x1="770" y1="440" x2="1190" y2="200"/><line x1="770" y1="440" x2="1190" y2="325"/><line x1="770" y1="440" x2="1190" y2="440"/><line x1="770" y1="440" x2="1190" y2="555"/><line x1="770" y1="440" x2="1190" y2="680"/></g>
</g></g>
<!-- scatter -->
<g filter="url(#sh)" fill="#fff"><circle cx="60" cy="745.9" r="5.2"/><circle cx="38" cy="755.9" r="5.2"/><circle cx="82" cy="755.9" r="5.2"/><circle cx="60" cy="767.8" r="5.2"/><circle cx="38" cy="779.8" r="5.2"/><circle cx="82" cy="779.8" r="5.2"/><circle cx="60" cy="789.9" r="5.2"/></g>
<!-- eraser -->
<g filter="url(#sh)"><g fill="#fff" transform="translate(20,837) scale(0.0520833)">
<path d="M255,515 L1005,515 Q1085,520 1130,590 L1345,915 Q1390,1020 1265,1020 L570,1020 Q480,1010 425,930 L195,630 Q140,520 255,515 Z"/>
</g></g>
<!-- smudge -->
<g filter="url(#sh)"><g fill="#fff" transform="translate(20,945) scale(0.0520833)">
<path d="M600,225 L1165,225 L1225,290 L1225,760 L1030,985 Q990,1025 900,1022 Q805,1015 828,930 L968,700 L545,1245 Q505,1290 430,1285 Q320,1275 350,1195 L645,715 L575,752 Q470,745 425,640 Q395,560 400,500 Q400,460 430,420 L535,270 Q560,228 600,225 Z"/>
</g></g>
<!-- bucket -->
<g filter="url(#sh)"><g transform="translate(20,1053) scale(0.0520833)">
<rect x="810" y="190" width="65" height="250" fill="#fff"/>
<path d="M718,338 L1150,765 L660,1262 L228,832 Z" fill="#fff" stroke="#222" stroke-width="22"/>
<path d="M870,500 L832,500 L832,562 Q762,572 762,617 Q766,668 832,670 L870,670 Z" fill="#2a2a2a"/>
<path d="M1060,615 L1185,612 L1305,672 L1305,1285 L1265,1290 L1168,748 Z" fill="#fff"/>
</g></g>
<!-- gradient tool -->
<g filter="url(#sh)">
<path fill-rule="evenodd" fill="#fff" d="M31.7,1179.8 H88.2 V1220.2 H31.7 Z M38,1183 V1217.2 H85.3 V1183 Z"/>
</g>
<rect x="38" y="1183" width="47.3" height="34.2" fill="url(#gr)"/>
<path d="M40,1183.6 H84.7 V1216" fill="none" stroke="#000" stroke-opacity="0.4" stroke-width="1.2"/>
<!-- text tool -->
<g filter="url(#sh)"><g transform="translate(20,1268) scale(0.0520833)"><path fill="#fff" d="M405,302 Q432,302 470,342 L1130,342 Q1165,302 1192,302 Q1218,310 1212,360 L1192,540 Q1178,582 1140,562 Q1112,478 1072,436 Q1040,410 988,410 L888,410 L888,1088 Q890,1162 950,1173 L998,1180 Q1024,1194 1020,1228 L555,1228 Q548,1194 572,1180 L622,1173 Q682,1163 685,1088 L685,410 L582,410 Q522,412 482,450 Q442,498 412,560 Q382,586 360,552 L393,335 Q398,302 405,302 Z"/></g></g>
<!-- fullscreen -->
<g fill="url(#fsg)" filter="url(#sh2)">
<path d="M1967,20 H1979.1 V24 H1971 V32.1 H1967 Z"/>
<path d="M2025.1,20 H2013 V24 H2021 V32.1 H2025.1 Z"/>
<path d="M1967,69.9 H1979.1 V65.9 H1971 V57.9 H1967 Z"/>
<path d="M2025.1,69.9 H2013 V65.9 H2021 V57.9 H2025.1 Z"/>
<path fill-rule="evenodd" d="M1975,28 H2017.1 V62 H1975 Z M1979.1,32.1 V57.9 H2013 V32.1 Z"/>
<rect x="1982.9" y="36" width="26.2" height="18"/>
</g>
<!-- heart & layers -->
<g filter="url(#sh2)"><g fill="#7f7f7f" transform="translate(15,1455) scale(0.08789)">
<path d="M405,282 C360,200 300,180 262,182 C170,185 110,260 112,340 C115,400 140,430 180,470 L350,635 Q405,682 460,635 L630,470 C670,430 695,400 695,340 C695,260 640,185 545,182 C505,180 450,200 405,282 Z"/>
<path d="M1548,105 L1835,300 L1548,500 L1258,300 Z"/>
<path d="M1258,410 L1292,380 L1548,560 L1803,380 L1835,410 L1548,612 Z"/>
<path d="M1258,520 L1292,490 L1548,668 L1803,490 L1835,520 L1548,718 Z"/>
</g></g>
<!-- rewind / ff -->
<g fill="#555759" filter="url(#sh2)">
<path d="M1885.2,1492.9 L1907,1472 L1907,1514 Z"/><path d="M1907,1492.9 L1926.5,1472 L1926.5,1514 Z"/>
<path d="M1967.4,1472 L1967.4,1514 L1987.1,1492.9 Z"/><path d="M1987.1,1472 L1987.1,1514 L2008.7,1492.9 Z"/>
</g>
</svg>
</body></html>
